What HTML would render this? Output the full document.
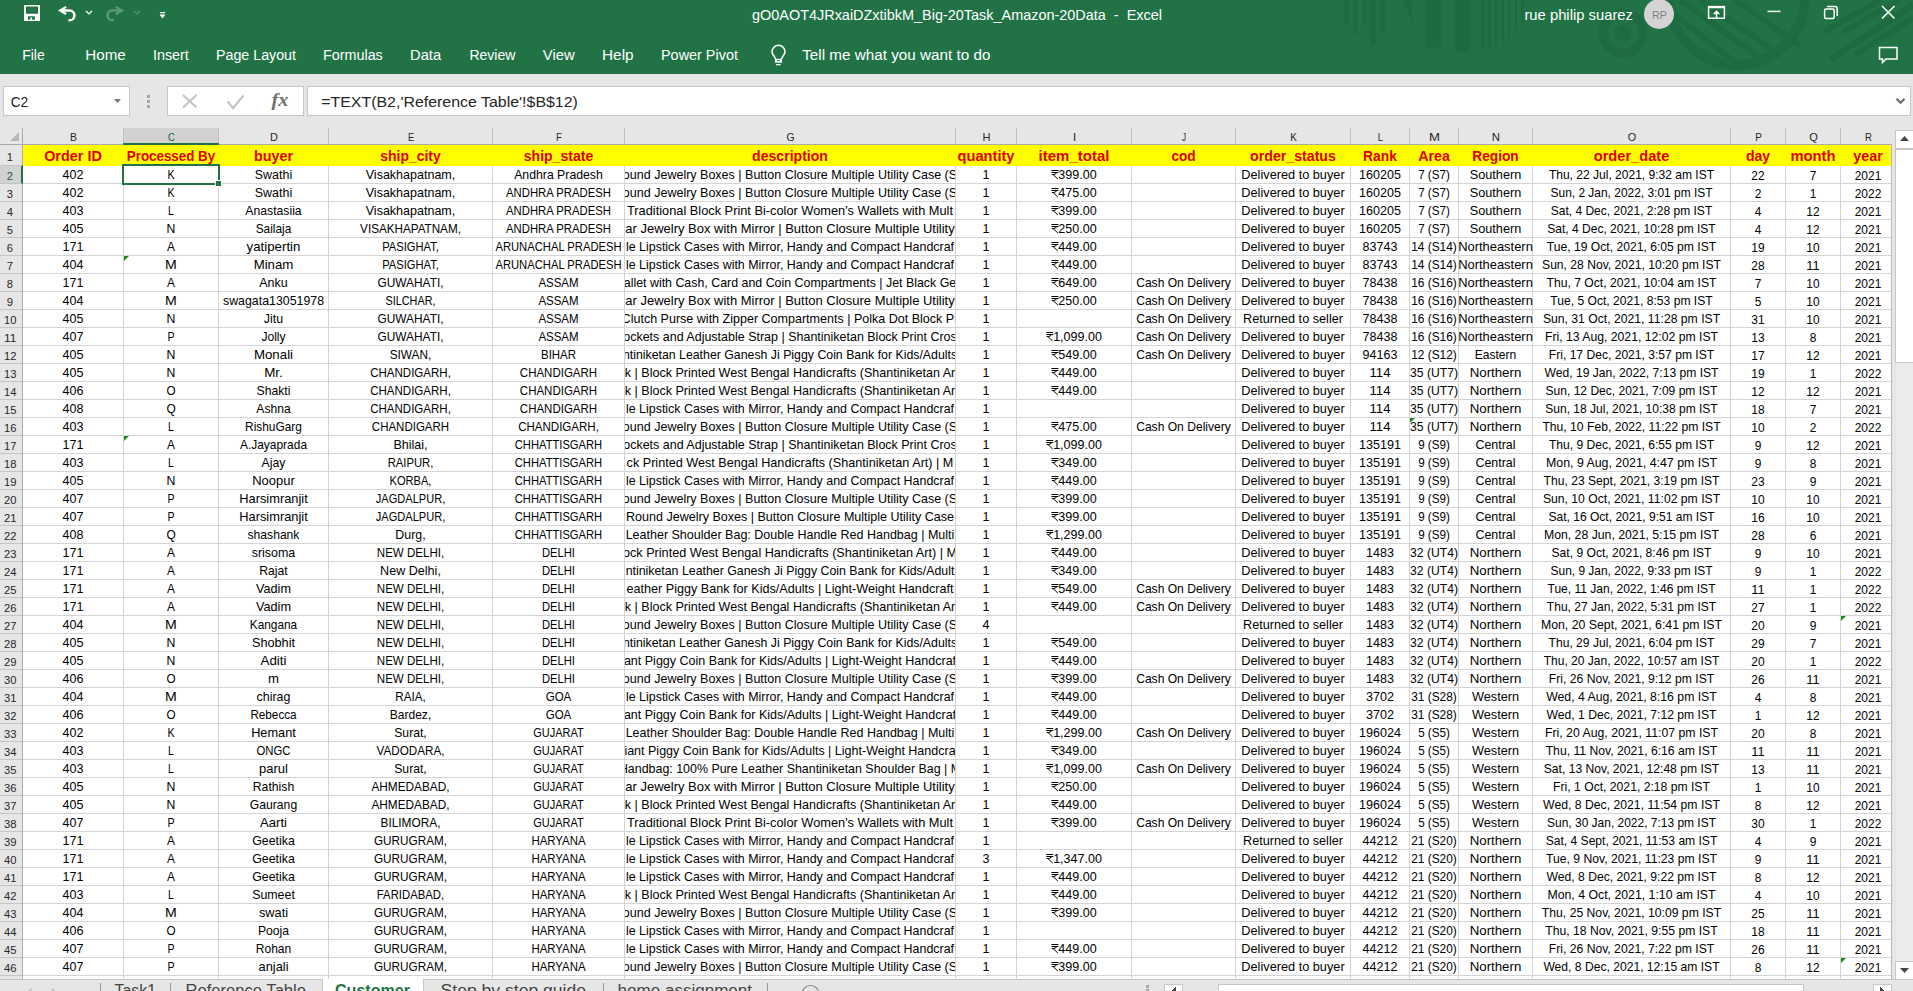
<!DOCTYPE html><html><head><meta charset="utf-8"><style>html,body{margin:0;padding:0;width:1913px;height:991px;overflow:hidden;background:#e6e6e6}svg{display:block}text{font-family:"Liberation Sans",sans-serif;white-space:pre}</style></head><body>
<svg width="1913" height="991" viewBox="0 0 1913 991" shape-rendering="crispEdges">
<rect x="0" y="0" width="1913" height="74" fill="#217346"/>
<g fill="#1f6b41" stroke="none" shape-rendering="geometricPrecision">
<rect x="1344" y="0" width="5" height="24"/>
<rect x="1353" y="0" width="5" height="34"/>
<rect x="1362" y="0" width="5" height="24"/>
<rect x="1370" y="0" width="6" height="45"/>
<rect x="1380" y="0" width="5" height="31"/>
<rect x="1481" y="0" width="3" height="50"/>
<rect x="1488" y="0" width="3" height="48"/>
<rect x="1495" y="0" width="2" height="46"/>
<rect x="1502" y="0" width="2" height="42"/>
<rect x="1508" y="0" width="2" height="37"/>
<rect x="1515" y="0" width="2" height="31"/>
<rect x="1521" y="0" width="3" height="23"/>
<path d="M1426,0 H1442 V46 A8,4 0 0 1 1426,42 Z"/>
<path d="M1455,0 H1470 V50 A8,4 0 0 1 1455,50 Z"/>
<path d="M1403,0 H1412 V23 Z"/>
</g>
<g fill="none" stroke="#1f6b41" shape-rendering="geometricPrecision">
<circle cx="1623" cy="33" r="20" stroke-width="9"/>
<circle cx="1623" cy="33" r="8" fill="#1f6b41" stroke="none"/>
<circle cx="1737" cy="-3" r="68" stroke-width="10"/>
</g>
<g stroke="#1f6b41" stroke-width="6" shape-rendering="geometricPrecision" stroke-linecap="butt">
<line x1="1680" y1="0" x2="1763" y2="60"/>
<line x1="1668" y1="10" x2="1740" y2="66"/>
<line x1="1700" y1="0" x2="1780" y2="55"/>
<line x1="1735" y1="0" x2="1800" y2="45"/>
<line x1="1824" y1="32" x2="1880" y2="0"/>
<line x1="1843" y1="32" x2="1900" y2="0"/>
<line x1="1830" y1="60" x2="1913" y2="5"/>
<line x1="1855" y1="55" x2="1913" y2="18"/>
</g>
<g shape-rendering="geometricPrecision">
<path d="M24,5 H40 V21 H24 Z M26,6.5 V13.8 H38 V6.5 Z M28,16.3 V19.7 H30.2 V17.4 H32.1 V19.7 H34.9 V16.3 Z" fill="#ffffff" fill-rule="evenodd"/>
<path d="M58,10.5 L65.5,6 L66.8,7.8 L62.2,10.5 L66.8,13.2 L65.5,15 Z" fill="#ffffff"/>
<path d="M61.5,10.5 H69.5 A4.9,4.9 0 0 1 69.5,20.3 H68.5" fill="none" stroke="#ffffff" stroke-width="2.6"/>
<path d="M86,11 L89,14 L92,11" fill="none" stroke="#ffffff" stroke-width="1.2"/>
<path d="M124,10.5 L116.5,6 L115.2,7.8 L119.8,10.5 L115.2,13.2 L116.5,15 Z" fill="#5a9a76"/>
<path d="M120.5,10.5 H112.5 A4.9,4.9 0 0 0 112.5,20.3 H113.5" fill="none" stroke="#5a9a76" stroke-width="2.6"/>
<path d="M134,11 L137,14 L140,11" fill="none" stroke="#4f9470" stroke-width="1.2"/>
<rect x="160" y="12" width="5" height="1.3" fill="#ffffff"/><path d="M159.5,14.5 H165.5 L162.5,18.5 Z" fill="#ffffff"/>
</g>
<text x="752.00" y="19.60" font-size="15" fill="#ffffff" textLength="409.99" lengthAdjust="spacingAndGlyphs">gO0AOT4JRxaiDZxtibkM_Big-20Task_Amazon-20Data  -  Excel</text>
<text x="1524.40" y="20.00" font-size="15" fill="#ffffff" textLength="108.61" lengthAdjust="spacingAndGlyphs">rue philip suarez</text>
<circle cx="1659" cy="14" r="15" fill="#d4d4d4" shape-rendering="geometricPrecision"/>
<text x="1652.00" y="19.00" font-size="11" fill="#808080" textLength="15.00" lengthAdjust="spacingAndGlyphs">RP</text>
<g shape-rendering="geometricPrecision" fill="none" stroke="#ffffff" stroke-width="1.5">
<rect x="1708.6" y="6.6" width="15.8" height="11.6"/><line x1="1708.6" y1="7.5" x2="1724.4" y2="7.5"/>
<path d="M1716.5,17.5 V12"/><path d="M1713.3,13.8 L1716.5,10.6 L1719.7,13.8 Z" fill="#ffffff" stroke-width="0.5"/>
<line x1="1767.5" y1="11.4" x2="1780.5" y2="11.4"/>
<rect x="1824.6" y="9" width="9.6" height="9.6" rx="1.5"/><path d="M1827,6.6 H1835 A2.2,2.2 0 0 1 1837.2,8.8 V16"/>
<path d="M1882,6 L1894.5,18.5 M1894.5,6 L1882,18.5"/>
<path d="M1879.5,47.5 H1897 V59 H1886 L1882.5,62.5 V59 H1879.5 Z"/>
</g>
<text x="22.20" y="60.30" font-size="15.5" fill="#ffffff" textLength="22.60" lengthAdjust="spacingAndGlyphs">File</text>
<text x="85.30" y="60.30" font-size="15.5" fill="#ffffff" textLength="40.39" lengthAdjust="spacingAndGlyphs">Home</text>
<text x="153.00" y="60.30" font-size="15.5" fill="#ffffff" textLength="35.80" lengthAdjust="spacingAndGlyphs">Insert</text>
<text x="216.00" y="60.30" font-size="15.5" fill="#ffffff" textLength="80.00" lengthAdjust="spacingAndGlyphs">Page Layout</text>
<text x="323.10" y="60.30" font-size="15.5" fill="#ffffff" textLength="59.69" lengthAdjust="spacingAndGlyphs">Formulas</text>
<text x="410.00" y="60.30" font-size="15.5" fill="#ffffff" textLength="31.09" lengthAdjust="spacingAndGlyphs">Data</text>
<text x="469.40" y="60.30" font-size="15.5" fill="#ffffff" textLength="46.06" lengthAdjust="spacingAndGlyphs">Review</text>
<text x="542.80" y="60.30" font-size="15.5" fill="#ffffff" textLength="31.86" lengthAdjust="spacingAndGlyphs">View</text>
<text x="602.00" y="60.30" font-size="15.5" fill="#ffffff" textLength="31.59" lengthAdjust="spacingAndGlyphs">Help</text>
<text x="661.00" y="60.30" font-size="15.5" fill="#ffffff" textLength="76.91" lengthAdjust="spacingAndGlyphs">Power Pivot</text>
<text x="802.20" y="60.30" font-size="15.5" fill="#ffffff" textLength="188.20" lengthAdjust="spacingAndGlyphs">Tell me what you want to do</text>
<g shape-rendering="geometricPrecision" fill="none" stroke="#ffffff" stroke-width="1.6">
<path d="M775.3,59 C775.3,56.5 772,54.8 772,51.8 A6.5,6.5 0 0 1 785,51.8 C785,54.8 781.7,56.5 781.7,59"/>
</g>
<rect x="775" y="58.8" width="7" height="3.9" fill="#ffffff" shape-rendering="geometricPrecision"/>
<rect x="777" y="60.2" width="3" height="0.9" fill="#217346" shape-rendering="geometricPrecision"/>
<rect x="776" y="64" width="4.6" height="1.3" fill="#ffffff" shape-rendering="geometricPrecision"/>
<rect x="3.5" y="86.5" width="126" height="29" fill="#ffffff" stroke="#c6c6c6" stroke-width="1"/>
<text x="10.70" y="106.90" font-size="15" fill="#222222" textLength="17.60" lengthAdjust="spacingAndGlyphs">C2</text>
<path d="M114,99 H121 L117.5,103 Z" fill="#777777" shape-rendering="geometricPrecision"/>
<rect x="147" y="95" width="3" height="3" fill="#a6a6a6"/>
<rect x="147" y="100" width="3" height="3" fill="#a6a6a6"/>
<rect x="147" y="105" width="3" height="3" fill="#a6a6a6"/>
<rect x="167.5" y="86.5" width="136" height="29" fill="#ffffff" stroke="#c6c6c6" stroke-width="1"/>
<g shape-rendering="geometricPrecision" fill="none" stroke="#c4c4c4" stroke-width="2.2">
<path d="M183,95 L196.5,107.5 M196.5,95 L183,107.5"/>
<path d="M227.5,101.5 L233,108 L243.5,95.5"/>
</g>
<text x="271.5" y="105.5" font-family="Liberation Serif" font-style="italic" font-weight="bold" font-size="19" fill="#707070" textLength="17" lengthAdjust="spacingAndGlyphs" style="font-family:'Liberation Serif',serif">fx</text>
<rect x="307.5" y="86.5" width="1603" height="29" fill="#ffffff" stroke="#c6c6c6" stroke-width="1"/>
<text x="321.20" y="106.60" font-size="15.2" fill="#262626" textLength="256.70" lengthAdjust="spacingAndGlyphs">=TEXT(B2,&#x27;Reference Table&#x27;!$B$12)</text>
<path d="M1896.5,98.8 L1900.5,102.8 L1904.5,98.8" fill="none" stroke="#6e6e6e" stroke-width="2.2" shape-rendering="geometricPrecision"/>
<rect x="0" y="128" width="1892" height="17" fill="#e6e6e6"/>
<rect x="123" y="128" width="96" height="15" fill="#d2d2d2"/>
<rect x="123" y="128" width="1" height="16" fill="#c2c2c2"/>
<rect x="218" y="128" width="1" height="16" fill="#c2c2c2"/>
<rect x="328" y="128" width="1" height="16" fill="#c2c2c2"/>
<rect x="492" y="128" width="1" height="16" fill="#c2c2c2"/>
<rect x="624" y="128" width="1" height="16" fill="#c2c2c2"/>
<rect x="955" y="128" width="1" height="16" fill="#c2c2c2"/>
<rect x="1016" y="128" width="1" height="16" fill="#c2c2c2"/>
<rect x="1131" y="128" width="1" height="16" fill="#c2c2c2"/>
<rect x="1235" y="128" width="1" height="16" fill="#c2c2c2"/>
<rect x="1350" y="128" width="1" height="16" fill="#c2c2c2"/>
<rect x="1409" y="128" width="1" height="16" fill="#c2c2c2"/>
<rect x="1458" y="128" width="1" height="16" fill="#c2c2c2"/>
<rect x="1532" y="128" width="1" height="16" fill="#c2c2c2"/>
<rect x="1730" y="128" width="1" height="16" fill="#c2c2c2"/>
<rect x="1785" y="128" width="1" height="16" fill="#c2c2c2"/>
<rect x="1840" y="128" width="1" height="16" fill="#c2c2c2"/>
<rect x="0" y="144" width="1892" height="1" fill="#ababab"/>
<rect x="123" y="143" width="96" height="2" fill="#217346"/>
<path d="M19,132 V141 H10 Z" fill="#b9b9b9" shape-rendering="geometricPrecision"/>
<rect x="22" y="128" width="1" height="851" fill="#ababab"/>
<rect x="23" y="145" width="1868" height="834" fill="#ffffff"/>
<rect x="23" y="145" width="1868" height="21" fill="#ffff00"/>
<rect x="23" y="183" width="1868" height="1" fill="#d4d4d4"/>
<rect x="23" y="201" width="1868" height="1" fill="#d4d4d4"/>
<rect x="23" y="219" width="1868" height="1" fill="#d4d4d4"/>
<rect x="23" y="237" width="1868" height="1" fill="#d4d4d4"/>
<rect x="23" y="255" width="1868" height="1" fill="#d4d4d4"/>
<rect x="23" y="273" width="1868" height="1" fill="#d4d4d4"/>
<rect x="23" y="291" width="1868" height="1" fill="#d4d4d4"/>
<rect x="23" y="309" width="1868" height="1" fill="#d4d4d4"/>
<rect x="23" y="327" width="1868" height="1" fill="#d4d4d4"/>
<rect x="23" y="345" width="1868" height="1" fill="#d4d4d4"/>
<rect x="23" y="363" width="1868" height="1" fill="#d4d4d4"/>
<rect x="23" y="381" width="1868" height="1" fill="#d4d4d4"/>
<rect x="23" y="399" width="1868" height="1" fill="#d4d4d4"/>
<rect x="23" y="417" width="1868" height="1" fill="#d4d4d4"/>
<rect x="23" y="435" width="1868" height="1" fill="#d4d4d4"/>
<rect x="23" y="453" width="1868" height="1" fill="#d4d4d4"/>
<rect x="23" y="471" width="1868" height="1" fill="#d4d4d4"/>
<rect x="23" y="489" width="1868" height="1" fill="#d4d4d4"/>
<rect x="23" y="507" width="1868" height="1" fill="#d4d4d4"/>
<rect x="23" y="525" width="1868" height="1" fill="#d4d4d4"/>
<rect x="23" y="543" width="1868" height="1" fill="#d4d4d4"/>
<rect x="23" y="561" width="1868" height="1" fill="#d4d4d4"/>
<rect x="23" y="579" width="1868" height="1" fill="#d4d4d4"/>
<rect x="23" y="597" width="1868" height="1" fill="#d4d4d4"/>
<rect x="23" y="615" width="1868" height="1" fill="#d4d4d4"/>
<rect x="23" y="633" width="1868" height="1" fill="#d4d4d4"/>
<rect x="23" y="651" width="1868" height="1" fill="#d4d4d4"/>
<rect x="23" y="669" width="1868" height="1" fill="#d4d4d4"/>
<rect x="23" y="687" width="1868" height="1" fill="#d4d4d4"/>
<rect x="23" y="705" width="1868" height="1" fill="#d4d4d4"/>
<rect x="23" y="723" width="1868" height="1" fill="#d4d4d4"/>
<rect x="23" y="741" width="1868" height="1" fill="#d4d4d4"/>
<rect x="23" y="759" width="1868" height="1" fill="#d4d4d4"/>
<rect x="23" y="777" width="1868" height="1" fill="#d4d4d4"/>
<rect x="23" y="795" width="1868" height="1" fill="#d4d4d4"/>
<rect x="23" y="813" width="1868" height="1" fill="#d4d4d4"/>
<rect x="23" y="831" width="1868" height="1" fill="#d4d4d4"/>
<rect x="23" y="849" width="1868" height="1" fill="#d4d4d4"/>
<rect x="23" y="867" width="1868" height="1" fill="#d4d4d4"/>
<rect x="23" y="885" width="1868" height="1" fill="#d4d4d4"/>
<rect x="23" y="903" width="1868" height="1" fill="#d4d4d4"/>
<rect x="23" y="921" width="1868" height="1" fill="#d4d4d4"/>
<rect x="23" y="939" width="1868" height="1" fill="#d4d4d4"/>
<rect x="23" y="957" width="1868" height="1" fill="#d4d4d4"/>
<rect x="23" y="975" width="1868" height="1" fill="#d4d4d4"/>
<rect x="123" y="166" width="1" height="813" fill="#d4d4d4"/>
<rect x="218" y="166" width="1" height="813" fill="#d4d4d4"/>
<rect x="328" y="166" width="1" height="813" fill="#d4d4d4"/>
<rect x="492" y="166" width="1" height="813" fill="#d4d4d4"/>
<rect x="624" y="166" width="1" height="813" fill="#d4d4d4"/>
<rect x="955" y="166" width="1" height="813" fill="#d4d4d4"/>
<rect x="1016" y="166" width="1" height="813" fill="#d4d4d4"/>
<rect x="1131" y="166" width="1" height="813" fill="#d4d4d4"/>
<rect x="1235" y="166" width="1" height="813" fill="#d4d4d4"/>
<rect x="1350" y="166" width="1" height="813" fill="#d4d4d4"/>
<rect x="1409" y="166" width="1" height="813" fill="#d4d4d4"/>
<rect x="1458" y="166" width="1" height="813" fill="#d4d4d4"/>
<rect x="1532" y="166" width="1" height="813" fill="#d4d4d4"/>
<rect x="1730" y="166" width="1" height="813" fill="#d4d4d4"/>
<rect x="1785" y="166" width="1" height="813" fill="#d4d4d4"/>
<rect x="1840" y="166" width="1" height="813" fill="#d4d4d4"/>
<rect x="1891" y="144" width="1" height="836" fill="#b8b8b8"/>
<rect x="0" y="145" width="22" height="834" fill="#e6e6e6"/>
<rect x="0" y="166" width="21" height="17" fill="#d2d2d2"/>
<rect x="21" y="165" width="2" height="19" fill="#217346"/>
<rect x="0" y="165" width="22" height="1" fill="#c6c6c6"/>
<rect x="0" y="183" width="22" height="1" fill="#c6c6c6"/>
<rect x="0" y="201" width="22" height="1" fill="#c6c6c6"/>
<rect x="0" y="219" width="22" height="1" fill="#c6c6c6"/>
<rect x="0" y="237" width="22" height="1" fill="#c6c6c6"/>
<rect x="0" y="255" width="22" height="1" fill="#c6c6c6"/>
<rect x="0" y="273" width="22" height="1" fill="#c6c6c6"/>
<rect x="0" y="291" width="22" height="1" fill="#c6c6c6"/>
<rect x="0" y="309" width="22" height="1" fill="#c6c6c6"/>
<rect x="0" y="327" width="22" height="1" fill="#c6c6c6"/>
<rect x="0" y="345" width="22" height="1" fill="#c6c6c6"/>
<rect x="0" y="363" width="22" height="1" fill="#c6c6c6"/>
<rect x="0" y="381" width="22" height="1" fill="#c6c6c6"/>
<rect x="0" y="399" width="22" height="1" fill="#c6c6c6"/>
<rect x="0" y="417" width="22" height="1" fill="#c6c6c6"/>
<rect x="0" y="435" width="22" height="1" fill="#c6c6c6"/>
<rect x="0" y="453" width="22" height="1" fill="#c6c6c6"/>
<rect x="0" y="471" width="22" height="1" fill="#c6c6c6"/>
<rect x="0" y="489" width="22" height="1" fill="#c6c6c6"/>
<rect x="0" y="507" width="22" height="1" fill="#c6c6c6"/>
<rect x="0" y="525" width="22" height="1" fill="#c6c6c6"/>
<rect x="0" y="543" width="22" height="1" fill="#c6c6c6"/>
<rect x="0" y="561" width="22" height="1" fill="#c6c6c6"/>
<rect x="0" y="579" width="22" height="1" fill="#c6c6c6"/>
<rect x="0" y="597" width="22" height="1" fill="#c6c6c6"/>
<rect x="0" y="615" width="22" height="1" fill="#c6c6c6"/>
<rect x="0" y="633" width="22" height="1" fill="#c6c6c6"/>
<rect x="0" y="651" width="22" height="1" fill="#c6c6c6"/>
<rect x="0" y="669" width="22" height="1" fill="#c6c6c6"/>
<rect x="0" y="687" width="22" height="1" fill="#c6c6c6"/>
<rect x="0" y="705" width="22" height="1" fill="#c6c6c6"/>
<rect x="0" y="723" width="22" height="1" fill="#c6c6c6"/>
<rect x="0" y="741" width="22" height="1" fill="#c6c6c6"/>
<rect x="0" y="759" width="22" height="1" fill="#c6c6c6"/>
<rect x="0" y="777" width="22" height="1" fill="#c6c6c6"/>
<rect x="0" y="795" width="22" height="1" fill="#c6c6c6"/>
<rect x="0" y="813" width="22" height="1" fill="#c6c6c6"/>
<rect x="0" y="831" width="22" height="1" fill="#c6c6c6"/>
<rect x="0" y="849" width="22" height="1" fill="#c6c6c6"/>
<rect x="0" y="867" width="22" height="1" fill="#c6c6c6"/>
<rect x="0" y="885" width="22" height="1" fill="#c6c6c6"/>
<rect x="0" y="903" width="22" height="1" fill="#c6c6c6"/>
<rect x="0" y="921" width="22" height="1" fill="#c6c6c6"/>
<rect x="0" y="939" width="22" height="1" fill="#c6c6c6"/>
<rect x="0" y="957" width="22" height="1" fill="#c6c6c6"/>
<rect x="0" y="975" width="22" height="1" fill="#c6c6c6"/>
<rect x="0" y="979" width="1892" height="1" fill="#c6c6c6"/>
<text x="73.50" y="141.20" font-size="11.8" fill="#262626" text-anchor="middle" textLength="6.96" lengthAdjust="spacingAndGlyphs">B</text>
<text x="171.50" y="141.20" font-size="11.8" fill="#1d5b37" text-anchor="middle" textLength="6.83" lengthAdjust="spacingAndGlyphs">C</text>
<text x="274.00" y="141.20" font-size="11.8" fill="#262626" text-anchor="middle" textLength="7.88" lengthAdjust="spacingAndGlyphs">D</text>
<text x="411.00" y="141.20" font-size="11.8" fill="#262626" text-anchor="middle" textLength="6.25" lengthAdjust="spacingAndGlyphs">E</text>
<text x="559.00" y="141.20" font-size="11.8" fill="#262626" text-anchor="middle" textLength="5.88" lengthAdjust="spacingAndGlyphs">F</text>
<text x="790.50" y="141.20" font-size="11.8" fill="#262626" text-anchor="middle" textLength="8.07" lengthAdjust="spacingAndGlyphs">G</text>
<text x="986.50" y="141.20" font-size="11.8" fill="#262626" text-anchor="middle" textLength="7.97" lengthAdjust="spacingAndGlyphs">H</text>
<text x="1074.50" y="141.20" font-size="11.8" fill="#262626" text-anchor="middle" textLength="3.23" lengthAdjust="spacingAndGlyphs">I</text>
<text x="1184.00" y="141.20" font-size="11.8" fill="#262626" text-anchor="middle" textLength="4.08" lengthAdjust="spacingAndGlyphs">J</text>
<text x="1293.50" y="141.20" font-size="11.8" fill="#262626" text-anchor="middle" textLength="6.65" lengthAdjust="spacingAndGlyphs">K</text>
<text x="1380.50" y="141.20" font-size="11.8" fill="#262626" text-anchor="middle" textLength="5.38" lengthAdjust="spacingAndGlyphs">L</text>
<text x="1434.50" y="141.20" font-size="11.8" fill="#262626" text-anchor="middle" textLength="10.94" lengthAdjust="spacingAndGlyphs">M</text>
<text x="1496.00" y="141.20" font-size="11.8" fill="#262626" text-anchor="middle" textLength="8.26" lengthAdjust="spacingAndGlyphs">N</text>
<text x="1632.00" y="141.20" font-size="11.8" fill="#262626" text-anchor="middle" textLength="8.47" lengthAdjust="spacingAndGlyphs">O</text>
<text x="1758.50" y="141.20" font-size="11.8" fill="#262626" text-anchor="middle" textLength="6.61" lengthAdjust="spacingAndGlyphs">P</text>
<text x="1813.50" y="141.20" font-size="11.8" fill="#262626" text-anchor="middle" textLength="8.61" lengthAdjust="spacingAndGlyphs">Q</text>
<text x="1868.50" y="141.20" font-size="11.8" fill="#262626" text-anchor="middle" textLength="6.95" lengthAdjust="spacingAndGlyphs">R</text>
<text x="9.80" y="161.00" font-size="11.6" fill="#262626" text-anchor="middle" textLength="6.23" lengthAdjust="spacingAndGlyphs">1</text>
<text x="9.80" y="180.00" font-size="11.6" fill="#1d5b37" text-anchor="middle" textLength="6.23" lengthAdjust="spacingAndGlyphs">2</text>
<text x="9.80" y="198.00" font-size="11.6" fill="#262626" text-anchor="middle" textLength="6.23" lengthAdjust="spacingAndGlyphs">3</text>
<text x="9.80" y="216.00" font-size="11.6" fill="#262626" text-anchor="middle" textLength="6.23" lengthAdjust="spacingAndGlyphs">4</text>
<text x="9.80" y="234.00" font-size="11.6" fill="#262626" text-anchor="middle" textLength="6.23" lengthAdjust="spacingAndGlyphs">5</text>
<text x="9.80" y="252.00" font-size="11.6" fill="#262626" text-anchor="middle" textLength="6.23" lengthAdjust="spacingAndGlyphs">6</text>
<text x="9.80" y="270.00" font-size="11.6" fill="#262626" text-anchor="middle" textLength="6.23" lengthAdjust="spacingAndGlyphs">7</text>
<text x="9.80" y="288.00" font-size="11.6" fill="#262626" text-anchor="middle" textLength="6.23" lengthAdjust="spacingAndGlyphs">8</text>
<text x="9.80" y="306.00" font-size="11.6" fill="#262626" text-anchor="middle" textLength="6.23" lengthAdjust="spacingAndGlyphs">9</text>
<text x="10.20" y="324.00" font-size="11.6" fill="#262626" text-anchor="middle" textLength="12.47" lengthAdjust="spacingAndGlyphs">10</text>
<text x="10.20" y="342.00" font-size="11.6" fill="#262626" text-anchor="middle" textLength="12.47" lengthAdjust="spacingAndGlyphs">11</text>
<text x="10.20" y="360.00" font-size="11.6" fill="#262626" text-anchor="middle" textLength="12.47" lengthAdjust="spacingAndGlyphs">12</text>
<text x="10.20" y="378.00" font-size="11.6" fill="#262626" text-anchor="middle" textLength="12.47" lengthAdjust="spacingAndGlyphs">13</text>
<text x="10.20" y="396.00" font-size="11.6" fill="#262626" text-anchor="middle" textLength="12.47" lengthAdjust="spacingAndGlyphs">14</text>
<text x="10.20" y="414.00" font-size="11.6" fill="#262626" text-anchor="middle" textLength="12.47" lengthAdjust="spacingAndGlyphs">15</text>
<text x="10.20" y="432.00" font-size="11.6" fill="#262626" text-anchor="middle" textLength="12.47" lengthAdjust="spacingAndGlyphs">16</text>
<text x="10.20" y="450.00" font-size="11.6" fill="#262626" text-anchor="middle" textLength="12.47" lengthAdjust="spacingAndGlyphs">17</text>
<text x="10.20" y="468.00" font-size="11.6" fill="#262626" text-anchor="middle" textLength="12.47" lengthAdjust="spacingAndGlyphs">18</text>
<text x="10.20" y="486.00" font-size="11.6" fill="#262626" text-anchor="middle" textLength="12.47" lengthAdjust="spacingAndGlyphs">19</text>
<text x="10.20" y="504.00" font-size="11.6" fill="#262626" text-anchor="middle" textLength="12.47" lengthAdjust="spacingAndGlyphs">20</text>
<text x="10.20" y="522.00" font-size="11.6" fill="#262626" text-anchor="middle" textLength="12.47" lengthAdjust="spacingAndGlyphs">21</text>
<text x="10.20" y="540.00" font-size="11.6" fill="#262626" text-anchor="middle" textLength="12.47" lengthAdjust="spacingAndGlyphs">22</text>
<text x="10.20" y="558.00" font-size="11.6" fill="#262626" text-anchor="middle" textLength="12.47" lengthAdjust="spacingAndGlyphs">23</text>
<text x="10.20" y="576.00" font-size="11.6" fill="#262626" text-anchor="middle" textLength="12.47" lengthAdjust="spacingAndGlyphs">24</text>
<text x="10.20" y="594.00" font-size="11.6" fill="#262626" text-anchor="middle" textLength="12.47" lengthAdjust="spacingAndGlyphs">25</text>
<text x="10.20" y="612.00" font-size="11.6" fill="#262626" text-anchor="middle" textLength="12.47" lengthAdjust="spacingAndGlyphs">26</text>
<text x="10.20" y="630.00" font-size="11.6" fill="#262626" text-anchor="middle" textLength="12.47" lengthAdjust="spacingAndGlyphs">27</text>
<text x="10.20" y="648.00" font-size="11.6" fill="#262626" text-anchor="middle" textLength="12.47" lengthAdjust="spacingAndGlyphs">28</text>
<text x="10.20" y="666.00" font-size="11.6" fill="#262626" text-anchor="middle" textLength="12.47" lengthAdjust="spacingAndGlyphs">29</text>
<text x="10.20" y="684.00" font-size="11.6" fill="#262626" text-anchor="middle" textLength="12.47" lengthAdjust="spacingAndGlyphs">30</text>
<text x="10.20" y="702.00" font-size="11.6" fill="#262626" text-anchor="middle" textLength="12.47" lengthAdjust="spacingAndGlyphs">31</text>
<text x="10.20" y="720.00" font-size="11.6" fill="#262626" text-anchor="middle" textLength="12.47" lengthAdjust="spacingAndGlyphs">32</text>
<text x="10.20" y="738.00" font-size="11.6" fill="#262626" text-anchor="middle" textLength="12.47" lengthAdjust="spacingAndGlyphs">33</text>
<text x="10.20" y="756.00" font-size="11.6" fill="#262626" text-anchor="middle" textLength="12.47" lengthAdjust="spacingAndGlyphs">34</text>
<text x="10.20" y="774.00" font-size="11.6" fill="#262626" text-anchor="middle" textLength="12.47" lengthAdjust="spacingAndGlyphs">35</text>
<text x="10.20" y="792.00" font-size="11.6" fill="#262626" text-anchor="middle" textLength="12.47" lengthAdjust="spacingAndGlyphs">36</text>
<text x="10.20" y="810.00" font-size="11.6" fill="#262626" text-anchor="middle" textLength="12.47" lengthAdjust="spacingAndGlyphs">37</text>
<text x="10.20" y="828.00" font-size="11.6" fill="#262626" text-anchor="middle" textLength="12.47" lengthAdjust="spacingAndGlyphs">38</text>
<text x="10.20" y="846.00" font-size="11.6" fill="#262626" text-anchor="middle" textLength="12.47" lengthAdjust="spacingAndGlyphs">39</text>
<text x="10.20" y="864.00" font-size="11.6" fill="#262626" text-anchor="middle" textLength="12.47" lengthAdjust="spacingAndGlyphs">40</text>
<text x="10.20" y="882.00" font-size="11.6" fill="#262626" text-anchor="middle" textLength="12.47" lengthAdjust="spacingAndGlyphs">41</text>
<text x="10.20" y="900.00" font-size="11.6" fill="#262626" text-anchor="middle" textLength="12.47" lengthAdjust="spacingAndGlyphs">42</text>
<text x="10.20" y="918.00" font-size="11.6" fill="#262626" text-anchor="middle" textLength="12.47" lengthAdjust="spacingAndGlyphs">43</text>
<text x="10.20" y="936.00" font-size="11.6" fill="#262626" text-anchor="middle" textLength="12.47" lengthAdjust="spacingAndGlyphs">44</text>
<text x="10.20" y="954.00" font-size="11.6" fill="#262626" text-anchor="middle" textLength="12.47" lengthAdjust="spacingAndGlyphs">45</text>
<text x="10.20" y="972.00" font-size="11.6" fill="#262626" text-anchor="middle" textLength="12.47" lengthAdjust="spacingAndGlyphs">46</text>
<text x="73.00" y="161.00" font-size="14.2" font-weight="bold" fill="#e00000" text-anchor="middle" textLength="57.67" lengthAdjust="spacingAndGlyphs">Order ID</text>
<text x="171.00" y="161.00" font-size="14.2" font-weight="bold" fill="#e00000" text-anchor="middle" textLength="88.40" lengthAdjust="spacingAndGlyphs">Processed By</text>
<text x="273.50" y="161.00" font-size="14.2" font-weight="bold" fill="#e00000" text-anchor="middle" textLength="39.03" lengthAdjust="spacingAndGlyphs">buyer</text>
<text x="410.50" y="161.00" font-size="14.2" font-weight="bold" fill="#e00000" text-anchor="middle" textLength="60.31" lengthAdjust="spacingAndGlyphs">ship_city</text>
<text x="558.50" y="161.00" font-size="14.2" font-weight="bold" fill="#e00000" text-anchor="middle" textLength="69.48" lengthAdjust="spacingAndGlyphs">ship_state</text>
<text x="790.00" y="161.00" font-size="14.2" font-weight="bold" fill="#e00000" text-anchor="middle" textLength="75.81" lengthAdjust="spacingAndGlyphs">description</text>
<text x="986.00" y="161.00" font-size="14.2" font-weight="bold" fill="#e00000" text-anchor="middle" textLength="57.05" lengthAdjust="spacingAndGlyphs">quantity</text>
<text x="1074.00" y="161.00" font-size="14.2" font-weight="bold" fill="#e00000" text-anchor="middle" textLength="70.84" lengthAdjust="spacingAndGlyphs">item_total</text>
<text x="1183.50" y="161.00" font-size="14.2" font-weight="bold" fill="#e00000" text-anchor="middle" textLength="24.25" lengthAdjust="spacingAndGlyphs">cod</text>
<text x="1293.00" y="161.00" font-size="14.2" font-weight="bold" fill="#e00000" text-anchor="middle" textLength="85.83" lengthAdjust="spacingAndGlyphs">order_status</text>
<text x="1380.00" y="161.00" font-size="14.2" font-weight="bold" fill="#e00000" text-anchor="middle" textLength="33.79" lengthAdjust="spacingAndGlyphs">Rank</text>
<text x="1434.00" y="161.00" font-size="14.2" font-weight="bold" fill="#e00000" text-anchor="middle" textLength="31.74" lengthAdjust="spacingAndGlyphs">Area</text>
<text x="1495.50" y="161.00" font-size="14.2" font-weight="bold" fill="#e00000" text-anchor="middle" textLength="46.39" lengthAdjust="spacingAndGlyphs">Region</text>
<text x="1631.50" y="161.00" font-size="14.2" font-weight="bold" fill="#e00000" text-anchor="middle" textLength="75.52" lengthAdjust="spacingAndGlyphs">order_date</text>
<text x="1758.00" y="161.00" font-size="14.2" font-weight="bold" fill="#e00000" text-anchor="middle" textLength="24.22" lengthAdjust="spacingAndGlyphs">day</text>
<text x="1813.00" y="161.00" font-size="14.2" font-weight="bold" fill="#e00000" text-anchor="middle" textLength="45.02" lengthAdjust="spacingAndGlyphs">month</text>
<text x="1868.00" y="161.00" font-size="14.2" font-weight="bold" fill="#e00000" text-anchor="middle" textLength="29.58" lengthAdjust="spacingAndGlyphs">year</text>
<defs>
<clipPath id="cg"><rect x="625" y="160" width="330" height="820"/></clipPath>
</defs>
<text x="73.00" y="179.00" font-size="13.3" fill="#000000" text-anchor="middle" textLength="20.91" lengthAdjust="spacingAndGlyphs">402</text>
<text x="171.00" y="179.00" font-size="13.3" fill="#000000" text-anchor="middle" textLength="7.14" lengthAdjust="spacingAndGlyphs">K</text>
<text x="273.50" y="179.00" font-size="13.3" fill="#000000" text-anchor="middle" textLength="37.32" lengthAdjust="spacingAndGlyphs">Swathi</text>
<text x="410.50" y="179.00" font-size="13.3" fill="#000000" text-anchor="middle" textLength="89.50" lengthAdjust="spacingAndGlyphs">Visakhapatnam,</text>
<text x="558.50" y="179.00" font-size="13.3" fill="#000000" text-anchor="middle" textLength="88.70" lengthAdjust="spacingAndGlyphs">Andhra Pradesh</text>
<g clip-path="url(#cg)">
<text x="790.00" y="179.00" font-size="13.3" fill="#000000" text-anchor="middle" textLength="334.28" lengthAdjust="spacingAndGlyphs">ound Jewelry Boxes | Button Closure Multiple Utility Case (S</text>
</g>
<text x="986.00" y="179.00" font-size="13.3" fill="#000000" text-anchor="middle" textLength="6.97" lengthAdjust="spacingAndGlyphs">1</text>
<path d="M1051.46,170.50 H1058.46 M1051.46,172.50 H1058.46 M1051.86,174.50 H1053.66 Q1056.36,174.50 1056.36,172.50 M1053.06,174.50 L1057.86,179.00" fill="none" stroke="#000" stroke-width="1.0" shape-rendering="geometricPrecision"/>
<text x="1058.33" y="179.00" font-size="13.3" fill="#000000" textLength="38.32" lengthAdjust="spacingAndGlyphs">399.00</text>
<text x="1293.00" y="179.00" font-size="13.3" fill="#000000" text-anchor="middle" textLength="103.29" lengthAdjust="spacingAndGlyphs">Delivered to buyer</text>
<text x="1380.00" y="179.00" font-size="13.3" fill="#000000" text-anchor="middle" textLength="41.81" lengthAdjust="spacingAndGlyphs">160205</text>
<text x="1434.00" y="179.00" font-size="13.3" fill="#000000" text-anchor="middle" textLength="31.70" lengthAdjust="spacingAndGlyphs">7 (S7)</text>
<text x="1495.50" y="179.00" font-size="13.3" fill="#000000" text-anchor="middle" textLength="51.48" lengthAdjust="spacingAndGlyphs">Southern</text>
<text x="1631.50" y="179.00" font-size="13.3" fill="#000000" text-anchor="middle" textLength="165.22" lengthAdjust="spacingAndGlyphs">Thu, 22 Jul, 2021, 9:32 am IST</text>
<text x="1758.00" y="180.00" font-size="12.4" fill="#000000" text-anchor="middle" textLength="13.28" lengthAdjust="spacingAndGlyphs">22</text>
<text x="1813.00" y="180.00" font-size="12.4" fill="#000000" text-anchor="middle" textLength="6.64" lengthAdjust="spacingAndGlyphs">7</text>
<text x="1868.00" y="180.00" font-size="12.4" fill="#000000" text-anchor="middle" textLength="26.56" lengthAdjust="spacingAndGlyphs">2021</text>
<text x="73.00" y="197.00" font-size="13.3" fill="#000000" text-anchor="middle" textLength="20.91" lengthAdjust="spacingAndGlyphs">402</text>
<text x="171.00" y="197.00" font-size="13.3" fill="#000000" text-anchor="middle" textLength="7.14" lengthAdjust="spacingAndGlyphs">K</text>
<text x="273.50" y="197.00" font-size="13.3" fill="#000000" text-anchor="middle" textLength="37.32" lengthAdjust="spacingAndGlyphs">Swathi</text>
<text x="410.50" y="197.00" font-size="13.3" fill="#000000" text-anchor="middle" textLength="89.50" lengthAdjust="spacingAndGlyphs">Visakhapatnam,</text>
<text x="558.50" y="197.00" font-size="13.3" fill="#000000" text-anchor="middle" textLength="104.84" lengthAdjust="spacingAndGlyphs">ANDHRA PRADESH</text>
<g clip-path="url(#cg)">
<text x="790.00" y="197.00" font-size="13.3" fill="#000000" text-anchor="middle" textLength="334.28" lengthAdjust="spacingAndGlyphs">ound Jewelry Boxes | Button Closure Multiple Utility Case (S</text>
</g>
<text x="986.00" y="197.00" font-size="13.3" fill="#000000" text-anchor="middle" textLength="6.97" lengthAdjust="spacingAndGlyphs">1</text>
<path d="M1051.46,188.50 H1058.46 M1051.46,190.50 H1058.46 M1051.86,192.50 H1053.66 Q1056.36,192.50 1056.36,190.50 M1053.06,192.50 L1057.86,197.00" fill="none" stroke="#000" stroke-width="1.0" shape-rendering="geometricPrecision"/>
<text x="1058.33" y="197.00" font-size="13.3" fill="#000000" textLength="38.32" lengthAdjust="spacingAndGlyphs">475.00</text>
<text x="1293.00" y="197.00" font-size="13.3" fill="#000000" text-anchor="middle" textLength="103.29" lengthAdjust="spacingAndGlyphs">Delivered to buyer</text>
<text x="1380.00" y="197.00" font-size="13.3" fill="#000000" text-anchor="middle" textLength="41.81" lengthAdjust="spacingAndGlyphs">160205</text>
<text x="1434.00" y="197.00" font-size="13.3" fill="#000000" text-anchor="middle" textLength="31.70" lengthAdjust="spacingAndGlyphs">7 (S7)</text>
<text x="1495.50" y="197.00" font-size="13.3" fill="#000000" text-anchor="middle" textLength="51.48" lengthAdjust="spacingAndGlyphs">Southern</text>
<text x="1631.50" y="197.00" font-size="13.3" fill="#000000" text-anchor="middle" textLength="161.93" lengthAdjust="spacingAndGlyphs">Sun, 2 Jan, 2022, 3:01 pm IST</text>
<text x="1758.00" y="198.00" font-size="12.4" fill="#000000" text-anchor="middle" textLength="6.64" lengthAdjust="spacingAndGlyphs">2</text>
<text x="1813.00" y="198.00" font-size="12.4" fill="#000000" text-anchor="middle" textLength="6.64" lengthAdjust="spacingAndGlyphs">1</text>
<text x="1868.00" y="198.00" font-size="12.4" fill="#000000" text-anchor="middle" textLength="26.56" lengthAdjust="spacingAndGlyphs">2022</text>
<text x="73.00" y="215.00" font-size="13.3" fill="#000000" text-anchor="middle" textLength="20.91" lengthAdjust="spacingAndGlyphs">403</text>
<text x="171.00" y="215.00" font-size="13.3" fill="#000000" text-anchor="middle" textLength="5.78" lengthAdjust="spacingAndGlyphs">L</text>
<text x="273.50" y="215.00" font-size="13.3" fill="#000000" text-anchor="middle" textLength="56.29" lengthAdjust="spacingAndGlyphs">Anastasiia</text>
<text x="410.50" y="215.00" font-size="13.3" fill="#000000" text-anchor="middle" textLength="89.50" lengthAdjust="spacingAndGlyphs">Visakhapatnam,</text>
<text x="558.50" y="215.00" font-size="13.3" fill="#000000" text-anchor="middle" textLength="104.84" lengthAdjust="spacingAndGlyphs">ANDHRA PRADESH</text>
<g clip-path="url(#cg)">
<text x="790.00" y="215.00" font-size="13.3" fill="#000000" text-anchor="middle" textLength="325.99" lengthAdjust="spacingAndGlyphs">Traditional Block Print Bi-color Women&#x27;s Wallets with Mult</text>
</g>
<text x="986.00" y="215.00" font-size="13.3" fill="#000000" text-anchor="middle" textLength="6.97" lengthAdjust="spacingAndGlyphs">1</text>
<path d="M1051.46,206.50 H1058.46 M1051.46,208.50 H1058.46 M1051.86,210.50 H1053.66 Q1056.36,210.50 1056.36,208.50 M1053.06,210.50 L1057.86,215.00" fill="none" stroke="#000" stroke-width="1.0" shape-rendering="geometricPrecision"/>
<text x="1058.33" y="215.00" font-size="13.3" fill="#000000" textLength="38.32" lengthAdjust="spacingAndGlyphs">399.00</text>
<text x="1293.00" y="215.00" font-size="13.3" fill="#000000" text-anchor="middle" textLength="103.29" lengthAdjust="spacingAndGlyphs">Delivered to buyer</text>
<text x="1380.00" y="215.00" font-size="13.3" fill="#000000" text-anchor="middle" textLength="41.81" lengthAdjust="spacingAndGlyphs">160205</text>
<text x="1434.00" y="215.00" font-size="13.3" fill="#000000" text-anchor="middle" textLength="31.70" lengthAdjust="spacingAndGlyphs">7 (S7)</text>
<text x="1495.50" y="215.00" font-size="13.3" fill="#000000" text-anchor="middle" textLength="51.48" lengthAdjust="spacingAndGlyphs">Southern</text>
<text x="1631.50" y="215.00" font-size="13.3" fill="#000000" text-anchor="middle" textLength="161.47" lengthAdjust="spacingAndGlyphs">Sat, 4 Dec, 2021, 2:28 pm IST</text>
<text x="1758.00" y="216.00" font-size="12.4" fill="#000000" text-anchor="middle" textLength="6.64" lengthAdjust="spacingAndGlyphs">4</text>
<text x="1813.00" y="216.00" font-size="12.4" fill="#000000" text-anchor="middle" textLength="13.28" lengthAdjust="spacingAndGlyphs">12</text>
<text x="1868.00" y="216.00" font-size="12.4" fill="#000000" text-anchor="middle" textLength="26.56" lengthAdjust="spacingAndGlyphs">2021</text>
<text x="73.00" y="233.00" font-size="13.3" fill="#000000" text-anchor="middle" textLength="20.91" lengthAdjust="spacingAndGlyphs">405</text>
<text x="171.00" y="233.00" font-size="13.3" fill="#000000" text-anchor="middle" textLength="8.88" lengthAdjust="spacingAndGlyphs">N</text>
<text x="273.50" y="233.00" font-size="13.3" fill="#000000" text-anchor="middle" textLength="35.68" lengthAdjust="spacingAndGlyphs">Sailaja</text>
<text x="410.50" y="233.00" font-size="13.3" fill="#000000" text-anchor="middle" textLength="100.80" lengthAdjust="spacingAndGlyphs">VISAKHAPATNAM,</text>
<text x="558.50" y="233.00" font-size="13.3" fill="#000000" text-anchor="middle" textLength="104.84" lengthAdjust="spacingAndGlyphs">ANDHRA PRADESH</text>
<g clip-path="url(#cg)">
<text x="790.00" y="233.00" font-size="13.3" fill="#000000" text-anchor="middle" textLength="329.39" lengthAdjust="spacingAndGlyphs">ar Jewelry Box with Mirror | Button Closure Multiple Utility</text>
</g>
<text x="986.00" y="233.00" font-size="13.3" fill="#000000" text-anchor="middle" textLength="6.97" lengthAdjust="spacingAndGlyphs">1</text>
<path d="M1051.46,224.50 H1058.46 M1051.46,226.50 H1058.46 M1051.86,228.50 H1053.66 Q1056.36,228.50 1056.36,226.50 M1053.06,228.50 L1057.86,233.00" fill="none" stroke="#000" stroke-width="1.0" shape-rendering="geometricPrecision"/>
<text x="1058.33" y="233.00" font-size="13.3" fill="#000000" textLength="38.32" lengthAdjust="spacingAndGlyphs">250.00</text>
<text x="1293.00" y="233.00" font-size="13.3" fill="#000000" text-anchor="middle" textLength="103.29" lengthAdjust="spacingAndGlyphs">Delivered to buyer</text>
<text x="1380.00" y="233.00" font-size="13.3" fill="#000000" text-anchor="middle" textLength="41.81" lengthAdjust="spacingAndGlyphs">160205</text>
<text x="1434.00" y="233.00" font-size="13.3" fill="#000000" text-anchor="middle" textLength="31.70" lengthAdjust="spacingAndGlyphs">7 (S7)</text>
<text x="1495.50" y="233.00" font-size="13.3" fill="#000000" text-anchor="middle" textLength="51.48" lengthAdjust="spacingAndGlyphs">Southern</text>
<text x="1631.50" y="233.00" font-size="13.3" fill="#000000" text-anchor="middle" textLength="168.44" lengthAdjust="spacingAndGlyphs">Sat, 4 Dec, 2021, 10:28 pm IST</text>
<text x="1758.00" y="234.00" font-size="12.4" fill="#000000" text-anchor="middle" textLength="6.64" lengthAdjust="spacingAndGlyphs">4</text>
<text x="1813.00" y="234.00" font-size="12.4" fill="#000000" text-anchor="middle" textLength="13.28" lengthAdjust="spacingAndGlyphs">12</text>
<text x="1868.00" y="234.00" font-size="12.4" fill="#000000" text-anchor="middle" textLength="26.56" lengthAdjust="spacingAndGlyphs">2021</text>
<text x="73.00" y="251.00" font-size="13.3" fill="#000000" text-anchor="middle" textLength="20.91" lengthAdjust="spacingAndGlyphs">171</text>
<text x="171.00" y="251.00" font-size="13.3" fill="#000000" text-anchor="middle" textLength="7.96" lengthAdjust="spacingAndGlyphs">A</text>
<text x="273.50" y="251.00" font-size="13.3" fill="#000000" text-anchor="middle" textLength="53.88" lengthAdjust="spacingAndGlyphs">yatipertin</text>
<text x="410.50" y="251.00" font-size="13.3" fill="#000000" text-anchor="middle" textLength="56.67" lengthAdjust="spacingAndGlyphs">PASIGHAT,</text>
<text x="558.50" y="251.00" font-size="13.3" fill="#000000" text-anchor="middle" textLength="126.17" lengthAdjust="spacingAndGlyphs">ARUNACHAL PRADESH</text>
<g clip-path="url(#cg)">
<text x="790.00" y="251.00" font-size="13.3" fill="#000000" text-anchor="middle" textLength="328.09" lengthAdjust="spacingAndGlyphs">le Lipstick Cases with Mirror, Handy and Compact Handcraf</text>
</g>
<text x="986.00" y="251.00" font-size="13.3" fill="#000000" text-anchor="middle" textLength="6.97" lengthAdjust="spacingAndGlyphs">1</text>
<path d="M1051.46,242.50 H1058.46 M1051.46,244.50 H1058.46 M1051.86,246.50 H1053.66 Q1056.36,246.50 1056.36,244.50 M1053.06,246.50 L1057.86,251.00" fill="none" stroke="#000" stroke-width="1.0" shape-rendering="geometricPrecision"/>
<text x="1058.33" y="251.00" font-size="13.3" fill="#000000" textLength="38.32" lengthAdjust="spacingAndGlyphs">449.00</text>
<text x="1293.00" y="251.00" font-size="13.3" fill="#000000" text-anchor="middle" textLength="103.29" lengthAdjust="spacingAndGlyphs">Delivered to buyer</text>
<text x="1380.00" y="251.00" font-size="13.3" fill="#000000" text-anchor="middle" textLength="34.85" lengthAdjust="spacingAndGlyphs">83743</text>
<text x="1434.00" y="251.00" font-size="13.3" fill="#000000" text-anchor="middle" textLength="45.64" lengthAdjust="spacingAndGlyphs">14 (S14)</text>
<text x="1495.50" y="251.00" font-size="13.3" fill="#000000" text-anchor="middle" textLength="74.72" lengthAdjust="spacingAndGlyphs">Northeastern</text>
<text x="1631.50" y="251.00" font-size="13.3" fill="#000000" text-anchor="middle" textLength="169.38" lengthAdjust="spacingAndGlyphs">Tue, 19 Oct, 2021, 6:05 pm IST</text>
<text x="1758.00" y="252.00" font-size="12.4" fill="#000000" text-anchor="middle" textLength="13.28" lengthAdjust="spacingAndGlyphs">19</text>
<text x="1813.00" y="252.00" font-size="12.4" fill="#000000" text-anchor="middle" textLength="13.28" lengthAdjust="spacingAndGlyphs">10</text>
<text x="1868.00" y="252.00" font-size="12.4" fill="#000000" text-anchor="middle" textLength="26.56" lengthAdjust="spacingAndGlyphs">2021</text>
<text x="73.00" y="269.00" font-size="13.3" fill="#000000" text-anchor="middle" textLength="20.91" lengthAdjust="spacingAndGlyphs">404</text>
<text x="171.00" y="269.00" font-size="13.3" fill="#000000" text-anchor="middle" textLength="11.76" lengthAdjust="spacingAndGlyphs">M</text>
<text x="273.50" y="269.00" font-size="13.3" fill="#000000" text-anchor="middle" textLength="39.71" lengthAdjust="spacingAndGlyphs">Minam</text>
<text x="410.50" y="269.00" font-size="13.3" fill="#000000" text-anchor="middle" textLength="56.67" lengthAdjust="spacingAndGlyphs">PASIGHAT,</text>
<text x="558.50" y="269.00" font-size="13.3" fill="#000000" text-anchor="middle" textLength="126.17" lengthAdjust="spacingAndGlyphs">ARUNACHAL PRADESH</text>
<g clip-path="url(#cg)">
<text x="790.00" y="269.00" font-size="13.3" fill="#000000" text-anchor="middle" textLength="328.09" lengthAdjust="spacingAndGlyphs">le Lipstick Cases with Mirror, Handy and Compact Handcraf</text>
</g>
<text x="986.00" y="269.00" font-size="13.3" fill="#000000" text-anchor="middle" textLength="6.97" lengthAdjust="spacingAndGlyphs">1</text>
<path d="M1051.46,260.50 H1058.46 M1051.46,262.50 H1058.46 M1051.86,264.50 H1053.66 Q1056.36,264.50 1056.36,262.50 M1053.06,264.50 L1057.86,269.00" fill="none" stroke="#000" stroke-width="1.0" shape-rendering="geometricPrecision"/>
<text x="1058.33" y="269.00" font-size="13.3" fill="#000000" textLength="38.32" lengthAdjust="spacingAndGlyphs">449.00</text>
<text x="1293.00" y="269.00" font-size="13.3" fill="#000000" text-anchor="middle" textLength="103.29" lengthAdjust="spacingAndGlyphs">Delivered to buyer</text>
<text x="1380.00" y="269.00" font-size="13.3" fill="#000000" text-anchor="middle" textLength="34.85" lengthAdjust="spacingAndGlyphs">83743</text>
<text x="1434.00" y="269.00" font-size="13.3" fill="#000000" text-anchor="middle" textLength="45.64" lengthAdjust="spacingAndGlyphs">14 (S14)</text>
<text x="1495.50" y="269.00" font-size="13.3" fill="#000000" text-anchor="middle" textLength="74.72" lengthAdjust="spacingAndGlyphs">Northeastern</text>
<text x="1631.50" y="269.00" font-size="13.3" fill="#000000" text-anchor="middle" textLength="178.89" lengthAdjust="spacingAndGlyphs">Sun, 28 Nov, 2021, 10:20 pm IST</text>
<text x="1758.00" y="270.00" font-size="12.4" fill="#000000" text-anchor="middle" textLength="13.28" lengthAdjust="spacingAndGlyphs">28</text>
<text x="1813.00" y="270.00" font-size="12.4" fill="#000000" text-anchor="middle" textLength="13.28" lengthAdjust="spacingAndGlyphs">11</text>
<text x="1868.00" y="270.00" font-size="12.4" fill="#000000" text-anchor="middle" textLength="26.56" lengthAdjust="spacingAndGlyphs">2021</text>
<text x="73.00" y="287.00" font-size="13.3" fill="#000000" text-anchor="middle" textLength="20.91" lengthAdjust="spacingAndGlyphs">171</text>
<text x="171.00" y="287.00" font-size="13.3" fill="#000000" text-anchor="middle" textLength="7.96" lengthAdjust="spacingAndGlyphs">A</text>
<text x="273.50" y="287.00" font-size="13.3" fill="#000000" text-anchor="middle" textLength="28.48" lengthAdjust="spacingAndGlyphs">Anku</text>
<text x="410.50" y="287.00" font-size="13.3" fill="#000000" text-anchor="middle" textLength="66.11" lengthAdjust="spacingAndGlyphs">GUWAHATI,</text>
<text x="558.50" y="287.00" font-size="13.3" fill="#000000" text-anchor="middle" textLength="40.20" lengthAdjust="spacingAndGlyphs">ASSAM</text>
<g clip-path="url(#cg)">
<text x="790.00" y="287.00" font-size="13.3" fill="#000000" text-anchor="middle" textLength="332.44" lengthAdjust="spacingAndGlyphs">allet with Cash, Card and Coin Compartments | Jet Black Ge</text>
</g>
<text x="986.00" y="287.00" font-size="13.3" fill="#000000" text-anchor="middle" textLength="6.97" lengthAdjust="spacingAndGlyphs">1</text>
<path d="M1051.46,278.50 H1058.46 M1051.46,280.50 H1058.46 M1051.86,282.50 H1053.66 Q1056.36,282.50 1056.36,280.50 M1053.06,282.50 L1057.86,287.00" fill="none" stroke="#000" stroke-width="1.0" shape-rendering="geometricPrecision"/>
<text x="1058.33" y="287.00" font-size="13.3" fill="#000000" textLength="38.32" lengthAdjust="spacingAndGlyphs">649.00</text>
<text x="1183.50" y="287.00" font-size="13.3" fill="#000000" text-anchor="middle" textLength="94.68" lengthAdjust="spacingAndGlyphs">Cash On Delivery</text>
<text x="1293.00" y="287.00" font-size="13.3" fill="#000000" text-anchor="middle" textLength="103.29" lengthAdjust="spacingAndGlyphs">Delivered to buyer</text>
<text x="1380.00" y="287.00" font-size="13.3" fill="#000000" text-anchor="middle" textLength="34.85" lengthAdjust="spacingAndGlyphs">78438</text>
<text x="1434.00" y="287.00" font-size="13.3" fill="#000000" text-anchor="middle" textLength="45.64" lengthAdjust="spacingAndGlyphs">16 (S16)</text>
<text x="1495.50" y="287.00" font-size="13.3" fill="#000000" text-anchor="middle" textLength="74.72" lengthAdjust="spacingAndGlyphs">Northeastern</text>
<text x="1631.50" y="287.00" font-size="13.3" fill="#000000" text-anchor="middle" textLength="169.98" lengthAdjust="spacingAndGlyphs">Thu, 7 Oct, 2021, 10:04 am IST</text>
<text x="1758.00" y="288.00" font-size="12.4" fill="#000000" text-anchor="middle" textLength="6.64" lengthAdjust="spacingAndGlyphs">7</text>
<text x="1813.00" y="288.00" font-size="12.4" fill="#000000" text-anchor="middle" textLength="13.28" lengthAdjust="spacingAndGlyphs">10</text>
<text x="1868.00" y="288.00" font-size="12.4" fill="#000000" text-anchor="middle" textLength="26.56" lengthAdjust="spacingAndGlyphs">2021</text>
<text x="73.00" y="305.00" font-size="13.3" fill="#000000" text-anchor="middle" textLength="20.91" lengthAdjust="spacingAndGlyphs">404</text>
<text x="171.00" y="305.00" font-size="13.3" fill="#000000" text-anchor="middle" textLength="11.76" lengthAdjust="spacingAndGlyphs">M</text>
<text x="273.50" y="305.00" font-size="13.3" fill="#000000" text-anchor="middle" textLength="101.02" lengthAdjust="spacingAndGlyphs">swagata13051978</text>
<text x="410.50" y="305.00" font-size="13.3" fill="#000000" text-anchor="middle" textLength="50.17" lengthAdjust="spacingAndGlyphs">SILCHAR,</text>
<text x="558.50" y="305.00" font-size="13.3" fill="#000000" text-anchor="middle" textLength="40.20" lengthAdjust="spacingAndGlyphs">ASSAM</text>
<g clip-path="url(#cg)">
<text x="790.00" y="305.00" font-size="13.3" fill="#000000" text-anchor="middle" textLength="329.39" lengthAdjust="spacingAndGlyphs">ar Jewelry Box with Mirror | Button Closure Multiple Utility</text>
</g>
<text x="986.00" y="305.00" font-size="13.3" fill="#000000" text-anchor="middle" textLength="6.97" lengthAdjust="spacingAndGlyphs">1</text>
<path d="M1051.46,296.50 H1058.46 M1051.46,298.50 H1058.46 M1051.86,300.50 H1053.66 Q1056.36,300.50 1056.36,298.50 M1053.06,300.50 L1057.86,305.00" fill="none" stroke="#000" stroke-width="1.0" shape-rendering="geometricPrecision"/>
<text x="1058.33" y="305.00" font-size="13.3" fill="#000000" textLength="38.32" lengthAdjust="spacingAndGlyphs">250.00</text>
<text x="1183.50" y="305.00" font-size="13.3" fill="#000000" text-anchor="middle" textLength="94.68" lengthAdjust="spacingAndGlyphs">Cash On Delivery</text>
<text x="1293.00" y="305.00" font-size="13.3" fill="#000000" text-anchor="middle" textLength="103.29" lengthAdjust="spacingAndGlyphs">Delivered to buyer</text>
<text x="1380.00" y="305.00" font-size="13.3" fill="#000000" text-anchor="middle" textLength="34.85" lengthAdjust="spacingAndGlyphs">78438</text>
<text x="1434.00" y="305.00" font-size="13.3" fill="#000000" text-anchor="middle" textLength="45.64" lengthAdjust="spacingAndGlyphs">16 (S16)</text>
<text x="1495.50" y="305.00" font-size="13.3" fill="#000000" text-anchor="middle" textLength="74.72" lengthAdjust="spacingAndGlyphs">Northeastern</text>
<text x="1631.50" y="305.00" font-size="13.3" fill="#000000" text-anchor="middle" textLength="162.41" lengthAdjust="spacingAndGlyphs">Tue, 5 Oct, 2021, 8:53 pm IST</text>
<text x="1758.00" y="306.00" font-size="12.4" fill="#000000" text-anchor="middle" textLength="6.64" lengthAdjust="spacingAndGlyphs">5</text>
<text x="1813.00" y="306.00" font-size="12.4" fill="#000000" text-anchor="middle" textLength="13.28" lengthAdjust="spacingAndGlyphs">10</text>
<text x="1868.00" y="306.00" font-size="12.4" fill="#000000" text-anchor="middle" textLength="26.56" lengthAdjust="spacingAndGlyphs">2021</text>
<text x="73.00" y="323.00" font-size="13.3" fill="#000000" text-anchor="middle" textLength="20.91" lengthAdjust="spacingAndGlyphs">405</text>
<text x="171.00" y="323.00" font-size="13.3" fill="#000000" text-anchor="middle" textLength="8.88" lengthAdjust="spacingAndGlyphs">N</text>
<text x="273.50" y="323.00" font-size="13.3" fill="#000000" text-anchor="middle" textLength="19.37" lengthAdjust="spacingAndGlyphs">Jitu</text>
<text x="410.50" y="323.00" font-size="13.3" fill="#000000" text-anchor="middle" textLength="66.11" lengthAdjust="spacingAndGlyphs">GUWAHATI,</text>
<text x="558.50" y="323.00" font-size="13.3" fill="#000000" text-anchor="middle" textLength="40.20" lengthAdjust="spacingAndGlyphs">ASSAM</text>
<g clip-path="url(#cg)">
<text x="790.00" y="323.00" font-size="13.3" fill="#000000" text-anchor="middle" textLength="336.78" lengthAdjust="spacingAndGlyphs">Clutch Purse with Zipper Compartments | Polka Dot Block Pr</text>
</g>
<text x="986.00" y="323.00" font-size="13.3" fill="#000000" text-anchor="middle" textLength="6.97" lengthAdjust="spacingAndGlyphs">1</text>
<text x="1183.50" y="323.00" font-size="13.3" fill="#000000" text-anchor="middle" textLength="94.68" lengthAdjust="spacingAndGlyphs">Cash On Delivery</text>
<text x="1293.00" y="323.00" font-size="13.3" fill="#000000" text-anchor="middle" textLength="100.01" lengthAdjust="spacingAndGlyphs">Returned to seller</text>
<text x="1380.00" y="323.00" font-size="13.3" fill="#000000" text-anchor="middle" textLength="34.85" lengthAdjust="spacingAndGlyphs">78438</text>
<text x="1434.00" y="323.00" font-size="13.3" fill="#000000" text-anchor="middle" textLength="45.64" lengthAdjust="spacingAndGlyphs">16 (S16)</text>
<text x="1495.50" y="323.00" font-size="13.3" fill="#000000" text-anchor="middle" textLength="74.72" lengthAdjust="spacingAndGlyphs">Northeastern</text>
<text x="1631.50" y="323.00" font-size="13.3" fill="#000000" text-anchor="middle" textLength="177.20" lengthAdjust="spacingAndGlyphs">Sun, 31 Oct, 2021, 11:28 pm IST</text>
<text x="1758.00" y="324.00" font-size="12.4" fill="#000000" text-anchor="middle" textLength="13.28" lengthAdjust="spacingAndGlyphs">31</text>
<text x="1813.00" y="324.00" font-size="12.4" fill="#000000" text-anchor="middle" textLength="13.28" lengthAdjust="spacingAndGlyphs">10</text>
<text x="1868.00" y="324.00" font-size="12.4" fill="#000000" text-anchor="middle" textLength="26.56" lengthAdjust="spacingAndGlyphs">2021</text>
<text x="73.00" y="341.00" font-size="13.3" fill="#000000" text-anchor="middle" textLength="20.91" lengthAdjust="spacingAndGlyphs">407</text>
<text x="171.00" y="341.00" font-size="13.3" fill="#000000" text-anchor="middle" textLength="7.10" lengthAdjust="spacingAndGlyphs">P</text>
<text x="273.50" y="341.00" font-size="13.3" fill="#000000" text-anchor="middle" textLength="24.17" lengthAdjust="spacingAndGlyphs">Jolly</text>
<text x="410.50" y="341.00" font-size="13.3" fill="#000000" text-anchor="middle" textLength="66.11" lengthAdjust="spacingAndGlyphs">GUWAHATI,</text>
<text x="558.50" y="341.00" font-size="13.3" fill="#000000" text-anchor="middle" textLength="40.20" lengthAdjust="spacingAndGlyphs">ASSAM</text>
<g clip-path="url(#cg)">
<text x="790.00" y="341.00" font-size="13.3" fill="#000000" text-anchor="middle" textLength="333.59" lengthAdjust="spacingAndGlyphs">ockets and Adjustable Strap | Shantiniketan Block Print Cros</text>
</g>
<text x="986.00" y="341.00" font-size="13.3" fill="#000000" text-anchor="middle" textLength="6.97" lengthAdjust="spacingAndGlyphs">1</text>
<path d="M1046.26,332.50 H1053.26 M1046.26,334.50 H1053.26 M1046.66,336.50 H1048.46 Q1051.16,336.50 1051.16,334.50 M1047.86,336.50 L1052.66,341.00" fill="none" stroke="#000" stroke-width="1.0" shape-rendering="geometricPrecision"/>
<text x="1053.13" y="341.00" font-size="13.3" fill="#000000" textLength="48.72" lengthAdjust="spacingAndGlyphs">1,099.00</text>
<text x="1183.50" y="341.00" font-size="13.3" fill="#000000" text-anchor="middle" textLength="94.68" lengthAdjust="spacingAndGlyphs">Cash On Delivery</text>
<text x="1293.00" y="341.00" font-size="13.3" fill="#000000" text-anchor="middle" textLength="103.29" lengthAdjust="spacingAndGlyphs">Delivered to buyer</text>
<text x="1380.00" y="341.00" font-size="13.3" fill="#000000" text-anchor="middle" textLength="34.85" lengthAdjust="spacingAndGlyphs">78438</text>
<text x="1434.00" y="341.00" font-size="13.3" fill="#000000" text-anchor="middle" textLength="45.64" lengthAdjust="spacingAndGlyphs">16 (S16)</text>
<text x="1495.50" y="341.00" font-size="13.3" fill="#000000" text-anchor="middle" textLength="74.72" lengthAdjust="spacingAndGlyphs">Northeastern</text>
<text x="1631.50" y="341.00" font-size="13.3" fill="#000000" text-anchor="middle" textLength="172.98" lengthAdjust="spacingAndGlyphs">Fri, 13 Aug, 2021, 12:02 pm IST</text>
<text x="1758.00" y="342.00" font-size="12.4" fill="#000000" text-anchor="middle" textLength="13.28" lengthAdjust="spacingAndGlyphs">13</text>
<text x="1813.00" y="342.00" font-size="12.4" fill="#000000" text-anchor="middle" textLength="6.64" lengthAdjust="spacingAndGlyphs">8</text>
<text x="1868.00" y="342.00" font-size="12.4" fill="#000000" text-anchor="middle" textLength="26.56" lengthAdjust="spacingAndGlyphs">2021</text>
<text x="73.00" y="359.00" font-size="13.3" fill="#000000" text-anchor="middle" textLength="20.91" lengthAdjust="spacingAndGlyphs">405</text>
<text x="171.00" y="359.00" font-size="13.3" fill="#000000" text-anchor="middle" textLength="8.88" lengthAdjust="spacingAndGlyphs">N</text>
<text x="273.50" y="359.00" font-size="13.3" fill="#000000" text-anchor="middle" textLength="39.13" lengthAdjust="spacingAndGlyphs">Monali</text>
<text x="410.50" y="359.00" font-size="13.3" fill="#000000" text-anchor="middle" textLength="41.65" lengthAdjust="spacingAndGlyphs">SIWAN,</text>
<text x="558.50" y="359.00" font-size="13.3" fill="#000000" text-anchor="middle" textLength="34.93" lengthAdjust="spacingAndGlyphs">BIHAR</text>
<g clip-path="url(#cg)">
<text x="790.00" y="359.00" font-size="13.3" fill="#000000" text-anchor="middle" textLength="334.13" lengthAdjust="spacingAndGlyphs">ntiniketan Leather Ganesh Ji Piggy Coin Bank for Kids/Adults</text>
</g>
<text x="986.00" y="359.00" font-size="13.3" fill="#000000" text-anchor="middle" textLength="6.97" lengthAdjust="spacingAndGlyphs">1</text>
<path d="M1051.46,350.50 H1058.46 M1051.46,352.50 H1058.46 M1051.86,354.50 H1053.66 Q1056.36,354.50 1056.36,352.50 M1053.06,354.50 L1057.86,359.00" fill="none" stroke="#000" stroke-width="1.0" shape-rendering="geometricPrecision"/>
<text x="1058.33" y="359.00" font-size="13.3" fill="#000000" textLength="38.32" lengthAdjust="spacingAndGlyphs">549.00</text>
<text x="1183.50" y="359.00" font-size="13.3" fill="#000000" text-anchor="middle" textLength="94.68" lengthAdjust="spacingAndGlyphs">Cash On Delivery</text>
<text x="1293.00" y="359.00" font-size="13.3" fill="#000000" text-anchor="middle" textLength="103.29" lengthAdjust="spacingAndGlyphs">Delivered to buyer</text>
<text x="1380.00" y="359.00" font-size="13.3" fill="#000000" text-anchor="middle" textLength="34.85" lengthAdjust="spacingAndGlyphs">94163</text>
<text x="1434.00" y="359.00" font-size="13.3" fill="#000000" text-anchor="middle" textLength="45.64" lengthAdjust="spacingAndGlyphs">12 (S12)</text>
<text x="1495.50" y="359.00" font-size="13.3" fill="#000000" text-anchor="middle" textLength="41.61" lengthAdjust="spacingAndGlyphs">Eastern</text>
<text x="1631.50" y="359.00" font-size="13.3" fill="#000000" text-anchor="middle" textLength="165.32" lengthAdjust="spacingAndGlyphs">Fri, 17 Dec, 2021, 3:57 pm IST</text>
<text x="1758.00" y="360.00" font-size="12.4" fill="#000000" text-anchor="middle" textLength="13.28" lengthAdjust="spacingAndGlyphs">17</text>
<text x="1813.00" y="360.00" font-size="12.4" fill="#000000" text-anchor="middle" textLength="13.28" lengthAdjust="spacingAndGlyphs">12</text>
<text x="1868.00" y="360.00" font-size="12.4" fill="#000000" text-anchor="middle" textLength="26.56" lengthAdjust="spacingAndGlyphs">2021</text>
<text x="73.00" y="377.00" font-size="13.3" fill="#000000" text-anchor="middle" textLength="20.91" lengthAdjust="spacingAndGlyphs">405</text>
<text x="171.00" y="377.00" font-size="13.3" fill="#000000" text-anchor="middle" textLength="8.88" lengthAdjust="spacingAndGlyphs">N</text>
<text x="273.50" y="377.00" font-size="13.3" fill="#000000" text-anchor="middle" textLength="18.64" lengthAdjust="spacingAndGlyphs">Mr.</text>
<text x="410.50" y="377.00" font-size="13.3" fill="#000000" text-anchor="middle" textLength="80.75" lengthAdjust="spacingAndGlyphs">CHANDIGARH,</text>
<text x="558.50" y="377.00" font-size="13.3" fill="#000000" text-anchor="middle" textLength="77.32" lengthAdjust="spacingAndGlyphs">CHANDIGARH</text>
<g clip-path="url(#cg)">
<text x="790.00" y="377.00" font-size="13.3" fill="#000000" text-anchor="middle" textLength="330.42" lengthAdjust="spacingAndGlyphs">k | Block Printed West Bengal Handicrafts (Shantiniketan Ar</text>
</g>
<text x="986.00" y="377.00" font-size="13.3" fill="#000000" text-anchor="middle" textLength="6.97" lengthAdjust="spacingAndGlyphs">1</text>
<path d="M1051.46,368.50 H1058.46 M1051.46,370.50 H1058.46 M1051.86,372.50 H1053.66 Q1056.36,372.50 1056.36,370.50 M1053.06,372.50 L1057.86,377.00" fill="none" stroke="#000" stroke-width="1.0" shape-rendering="geometricPrecision"/>
<text x="1058.33" y="377.00" font-size="13.3" fill="#000000" textLength="38.32" lengthAdjust="spacingAndGlyphs">449.00</text>
<text x="1293.00" y="377.00" font-size="13.3" fill="#000000" text-anchor="middle" textLength="103.29" lengthAdjust="spacingAndGlyphs">Delivered to buyer</text>
<text x="1380.00" y="377.00" font-size="13.3" fill="#000000" text-anchor="middle" textLength="20.91" lengthAdjust="spacingAndGlyphs">114</text>
<text x="1434.00" y="377.00" font-size="13.3" fill="#000000" text-anchor="middle" textLength="47.88" lengthAdjust="spacingAndGlyphs">35 (UT7)</text>
<text x="1495.50" y="377.00" font-size="13.3" fill="#000000" text-anchor="middle" textLength="51.61" lengthAdjust="spacingAndGlyphs">Northern</text>
<text x="1631.50" y="377.00" font-size="13.3" fill="#000000" text-anchor="middle" textLength="173.93" lengthAdjust="spacingAndGlyphs">Wed, 19 Jan, 2022, 7:13 pm IST</text>
<text x="1758.00" y="378.00" font-size="12.4" fill="#000000" text-anchor="middle" textLength="13.28" lengthAdjust="spacingAndGlyphs">19</text>
<text x="1813.00" y="378.00" font-size="12.4" fill="#000000" text-anchor="middle" textLength="6.64" lengthAdjust="spacingAndGlyphs">1</text>
<text x="1868.00" y="378.00" font-size="12.4" fill="#000000" text-anchor="middle" textLength="26.56" lengthAdjust="spacingAndGlyphs">2022</text>
<text x="73.00" y="395.00" font-size="13.3" fill="#000000" text-anchor="middle" textLength="20.91" lengthAdjust="spacingAndGlyphs">406</text>
<text x="171.00" y="395.00" font-size="13.3" fill="#000000" text-anchor="middle" textLength="9.10" lengthAdjust="spacingAndGlyphs">O</text>
<text x="273.50" y="395.00" font-size="13.3" fill="#000000" text-anchor="middle" textLength="33.97" lengthAdjust="spacingAndGlyphs">Shakti</text>
<text x="410.50" y="395.00" font-size="13.3" fill="#000000" text-anchor="middle" textLength="80.75" lengthAdjust="spacingAndGlyphs">CHANDIGARH,</text>
<text x="558.50" y="395.00" font-size="13.3" fill="#000000" text-anchor="middle" textLength="77.32" lengthAdjust="spacingAndGlyphs">CHANDIGARH</text>
<g clip-path="url(#cg)">
<text x="790.00" y="395.00" font-size="13.3" fill="#000000" text-anchor="middle" textLength="330.42" lengthAdjust="spacingAndGlyphs">k | Block Printed West Bengal Handicrafts (Shantiniketan Ar</text>
</g>
<text x="986.00" y="395.00" font-size="13.3" fill="#000000" text-anchor="middle" textLength="6.97" lengthAdjust="spacingAndGlyphs">1</text>
<path d="M1051.46,386.50 H1058.46 M1051.46,388.50 H1058.46 M1051.86,390.50 H1053.66 Q1056.36,390.50 1056.36,388.50 M1053.06,390.50 L1057.86,395.00" fill="none" stroke="#000" stroke-width="1.0" shape-rendering="geometricPrecision"/>
<text x="1058.33" y="395.00" font-size="13.3" fill="#000000" textLength="38.32" lengthAdjust="spacingAndGlyphs">449.00</text>
<text x="1293.00" y="395.00" font-size="13.3" fill="#000000" text-anchor="middle" textLength="103.29" lengthAdjust="spacingAndGlyphs">Delivered to buyer</text>
<text x="1380.00" y="395.00" font-size="13.3" fill="#000000" text-anchor="middle" textLength="20.91" lengthAdjust="spacingAndGlyphs">114</text>
<text x="1434.00" y="395.00" font-size="13.3" fill="#000000" text-anchor="middle" textLength="47.88" lengthAdjust="spacingAndGlyphs">35 (UT7)</text>
<text x="1495.50" y="395.00" font-size="13.3" fill="#000000" text-anchor="middle" textLength="51.61" lengthAdjust="spacingAndGlyphs">Northern</text>
<text x="1631.50" y="395.00" font-size="13.3" fill="#000000" text-anchor="middle" textLength="171.82" lengthAdjust="spacingAndGlyphs">Sun, 12 Dec, 2021, 7:09 pm IST</text>
<text x="1758.00" y="396.00" font-size="12.4" fill="#000000" text-anchor="middle" textLength="13.28" lengthAdjust="spacingAndGlyphs">12</text>
<text x="1813.00" y="396.00" font-size="12.4" fill="#000000" text-anchor="middle" textLength="13.28" lengthAdjust="spacingAndGlyphs">12</text>
<text x="1868.00" y="396.00" font-size="12.4" fill="#000000" text-anchor="middle" textLength="26.56" lengthAdjust="spacingAndGlyphs">2021</text>
<text x="73.00" y="413.00" font-size="13.3" fill="#000000" text-anchor="middle" textLength="20.91" lengthAdjust="spacingAndGlyphs">408</text>
<text x="171.00" y="413.00" font-size="13.3" fill="#000000" text-anchor="middle" textLength="9.25" lengthAdjust="spacingAndGlyphs">Q</text>
<text x="273.50" y="413.00" font-size="13.3" fill="#000000" text-anchor="middle" textLength="34.37" lengthAdjust="spacingAndGlyphs">Ashna</text>
<text x="410.50" y="413.00" font-size="13.3" fill="#000000" text-anchor="middle" textLength="80.75" lengthAdjust="spacingAndGlyphs">CHANDIGARH,</text>
<text x="558.50" y="413.00" font-size="13.3" fill="#000000" text-anchor="middle" textLength="77.32" lengthAdjust="spacingAndGlyphs">CHANDIGARH</text>
<g clip-path="url(#cg)">
<text x="790.00" y="413.00" font-size="13.3" fill="#000000" text-anchor="middle" textLength="328.09" lengthAdjust="spacingAndGlyphs">le Lipstick Cases with Mirror, Handy and Compact Handcraf</text>
</g>
<text x="986.00" y="413.00" font-size="13.3" fill="#000000" text-anchor="middle" textLength="6.97" lengthAdjust="spacingAndGlyphs">1</text>
<text x="1293.00" y="413.00" font-size="13.3" fill="#000000" text-anchor="middle" textLength="103.29" lengthAdjust="spacingAndGlyphs">Delivered to buyer</text>
<text x="1380.00" y="413.00" font-size="13.3" fill="#000000" text-anchor="middle" textLength="20.91" lengthAdjust="spacingAndGlyphs">114</text>
<text x="1434.00" y="413.00" font-size="13.3" fill="#000000" text-anchor="middle" textLength="47.88" lengthAdjust="spacingAndGlyphs">35 (UT7)</text>
<text x="1495.50" y="413.00" font-size="13.3" fill="#000000" text-anchor="middle" textLength="51.61" lengthAdjust="spacingAndGlyphs">Northern</text>
<text x="1631.50" y="413.00" font-size="13.3" fill="#000000" text-anchor="middle" textLength="172.44" lengthAdjust="spacingAndGlyphs">Sun, 18 Jul, 2021, 10:38 pm IST</text>
<text x="1758.00" y="414.00" font-size="12.4" fill="#000000" text-anchor="middle" textLength="13.28" lengthAdjust="spacingAndGlyphs">18</text>
<text x="1813.00" y="414.00" font-size="12.4" fill="#000000" text-anchor="middle" textLength="6.64" lengthAdjust="spacingAndGlyphs">7</text>
<text x="1868.00" y="414.00" font-size="12.4" fill="#000000" text-anchor="middle" textLength="26.56" lengthAdjust="spacingAndGlyphs">2021</text>
<text x="73.00" y="431.00" font-size="13.3" fill="#000000" text-anchor="middle" textLength="20.91" lengthAdjust="spacingAndGlyphs">403</text>
<text x="171.00" y="431.00" font-size="13.3" fill="#000000" text-anchor="middle" textLength="5.78" lengthAdjust="spacingAndGlyphs">L</text>
<text x="273.50" y="431.00" font-size="13.3" fill="#000000" text-anchor="middle" textLength="56.79" lengthAdjust="spacingAndGlyphs">RishuGarg</text>
<text x="410.50" y="431.00" font-size="13.3" fill="#000000" text-anchor="middle" textLength="77.32" lengthAdjust="spacingAndGlyphs">CHANDIGARH</text>
<text x="558.50" y="431.00" font-size="13.3" fill="#000000" text-anchor="middle" textLength="80.75" lengthAdjust="spacingAndGlyphs">CHANDIGARH,</text>
<g clip-path="url(#cg)">
<text x="790.00" y="431.00" font-size="13.3" fill="#000000" text-anchor="middle" textLength="334.28" lengthAdjust="spacingAndGlyphs">ound Jewelry Boxes | Button Closure Multiple Utility Case (S</text>
</g>
<text x="986.00" y="431.00" font-size="13.3" fill="#000000" text-anchor="middle" textLength="6.97" lengthAdjust="spacingAndGlyphs">1</text>
<path d="M1051.46,422.50 H1058.46 M1051.46,424.50 H1058.46 M1051.86,426.50 H1053.66 Q1056.36,426.50 1056.36,424.50 M1053.06,426.50 L1057.86,431.00" fill="none" stroke="#000" stroke-width="1.0" shape-rendering="geometricPrecision"/>
<text x="1058.33" y="431.00" font-size="13.3" fill="#000000" textLength="38.32" lengthAdjust="spacingAndGlyphs">475.00</text>
<text x="1183.50" y="431.00" font-size="13.3" fill="#000000" text-anchor="middle" textLength="94.68" lengthAdjust="spacingAndGlyphs">Cash On Delivery</text>
<text x="1293.00" y="431.00" font-size="13.3" fill="#000000" text-anchor="middle" textLength="103.29" lengthAdjust="spacingAndGlyphs">Delivered to buyer</text>
<text x="1380.00" y="431.00" font-size="13.3" fill="#000000" text-anchor="middle" textLength="20.91" lengthAdjust="spacingAndGlyphs">114</text>
<text x="1434.00" y="431.00" font-size="13.3" fill="#000000" text-anchor="middle" textLength="47.88" lengthAdjust="spacingAndGlyphs">35 (UT7)</text>
<text x="1495.50" y="431.00" font-size="13.3" fill="#000000" text-anchor="middle" textLength="51.61" lengthAdjust="spacingAndGlyphs">Northern</text>
<text x="1631.50" y="431.00" font-size="13.3" fill="#000000" text-anchor="middle" textLength="178.24" lengthAdjust="spacingAndGlyphs">Thu, 10 Feb, 2022, 11:22 pm IST</text>
<text x="1758.00" y="432.00" font-size="12.4" fill="#000000" text-anchor="middle" textLength="13.28" lengthAdjust="spacingAndGlyphs">10</text>
<text x="1813.00" y="432.00" font-size="12.4" fill="#000000" text-anchor="middle" textLength="6.64" lengthAdjust="spacingAndGlyphs">2</text>
<text x="1868.00" y="432.00" font-size="12.4" fill="#000000" text-anchor="middle" textLength="26.56" lengthAdjust="spacingAndGlyphs">2022</text>
<text x="73.00" y="449.00" font-size="13.3" fill="#000000" text-anchor="middle" textLength="20.91" lengthAdjust="spacingAndGlyphs">171</text>
<text x="171.00" y="449.00" font-size="13.3" fill="#000000" text-anchor="middle" textLength="7.96" lengthAdjust="spacingAndGlyphs">A</text>
<text x="273.50" y="449.00" font-size="13.3" fill="#000000" text-anchor="middle" textLength="67.08" lengthAdjust="spacingAndGlyphs">A.Jayaprada</text>
<text x="410.50" y="449.00" font-size="13.3" fill="#000000" text-anchor="middle" textLength="34.19" lengthAdjust="spacingAndGlyphs">Bhilai,</text>
<text x="558.50" y="449.00" font-size="13.3" fill="#000000" text-anchor="middle" textLength="87.38" lengthAdjust="spacingAndGlyphs">CHHATTISGARH</text>
<g clip-path="url(#cg)">
<text x="790.00" y="449.00" font-size="13.3" fill="#000000" text-anchor="middle" textLength="333.59" lengthAdjust="spacingAndGlyphs">ockets and Adjustable Strap | Shantiniketan Block Print Cros</text>
</g>
<text x="986.00" y="449.00" font-size="13.3" fill="#000000" text-anchor="middle" textLength="6.97" lengthAdjust="spacingAndGlyphs">1</text>
<path d="M1046.26,440.50 H1053.26 M1046.26,442.50 H1053.26 M1046.66,444.50 H1048.46 Q1051.16,444.50 1051.16,442.50 M1047.86,444.50 L1052.66,449.00" fill="none" stroke="#000" stroke-width="1.0" shape-rendering="geometricPrecision"/>
<text x="1053.13" y="449.00" font-size="13.3" fill="#000000" textLength="48.72" lengthAdjust="spacingAndGlyphs">1,099.00</text>
<text x="1293.00" y="449.00" font-size="13.3" fill="#000000" text-anchor="middle" textLength="103.29" lengthAdjust="spacingAndGlyphs">Delivered to buyer</text>
<text x="1380.00" y="449.00" font-size="13.3" fill="#000000" text-anchor="middle" textLength="41.81" lengthAdjust="spacingAndGlyphs">135191</text>
<text x="1434.00" y="449.00" font-size="13.3" fill="#000000" text-anchor="middle" textLength="31.70" lengthAdjust="spacingAndGlyphs">9 (S9)</text>
<text x="1495.50" y="449.00" font-size="13.3" fill="#000000" text-anchor="middle" textLength="40.13" lengthAdjust="spacingAndGlyphs">Central</text>
<text x="1631.50" y="449.00" font-size="13.3" fill="#000000" text-anchor="middle" textLength="165.24" lengthAdjust="spacingAndGlyphs">Thu, 9 Dec, 2021, 6:55 pm IST</text>
<text x="1758.00" y="450.00" font-size="12.4" fill="#000000" text-anchor="middle" textLength="6.64" lengthAdjust="spacingAndGlyphs">9</text>
<text x="1813.00" y="450.00" font-size="12.4" fill="#000000" text-anchor="middle" textLength="13.28" lengthAdjust="spacingAndGlyphs">12</text>
<text x="1868.00" y="450.00" font-size="12.4" fill="#000000" text-anchor="middle" textLength="26.56" lengthAdjust="spacingAndGlyphs">2021</text>
<text x="73.00" y="467.00" font-size="13.3" fill="#000000" text-anchor="middle" textLength="20.91" lengthAdjust="spacingAndGlyphs">403</text>
<text x="171.00" y="467.00" font-size="13.3" fill="#000000" text-anchor="middle" textLength="5.78" lengthAdjust="spacingAndGlyphs">L</text>
<text x="273.50" y="467.00" font-size="13.3" fill="#000000" text-anchor="middle" textLength="23.80" lengthAdjust="spacingAndGlyphs">Ajay</text>
<text x="410.50" y="467.00" font-size="13.3" fill="#000000" text-anchor="middle" textLength="45.71" lengthAdjust="spacingAndGlyphs">RAIPUR,</text>
<text x="558.50" y="467.00" font-size="13.3" fill="#000000" text-anchor="middle" textLength="87.38" lengthAdjust="spacingAndGlyphs">CHHATTISGARH</text>
<g clip-path="url(#cg)">
<text x="790.00" y="467.00" font-size="13.3" fill="#000000" text-anchor="middle" textLength="326.81" lengthAdjust="spacingAndGlyphs">ck Printed West Bengal Handicrafts (Shantiniketan Art) | M</text>
</g>
<text x="986.00" y="467.00" font-size="13.3" fill="#000000" text-anchor="middle" textLength="6.97" lengthAdjust="spacingAndGlyphs">1</text>
<path d="M1051.46,458.50 H1058.46 M1051.46,460.50 H1058.46 M1051.86,462.50 H1053.66 Q1056.36,462.50 1056.36,460.50 M1053.06,462.50 L1057.86,467.00" fill="none" stroke="#000" stroke-width="1.0" shape-rendering="geometricPrecision"/>
<text x="1058.33" y="467.00" font-size="13.3" fill="#000000" textLength="38.32" lengthAdjust="spacingAndGlyphs">349.00</text>
<text x="1293.00" y="467.00" font-size="13.3" fill="#000000" text-anchor="middle" textLength="103.29" lengthAdjust="spacingAndGlyphs">Delivered to buyer</text>
<text x="1380.00" y="467.00" font-size="13.3" fill="#000000" text-anchor="middle" textLength="41.81" lengthAdjust="spacingAndGlyphs">135191</text>
<text x="1434.00" y="467.00" font-size="13.3" fill="#000000" text-anchor="middle" textLength="31.70" lengthAdjust="spacingAndGlyphs">9 (S9)</text>
<text x="1495.50" y="467.00" font-size="13.3" fill="#000000" text-anchor="middle" textLength="40.13" lengthAdjust="spacingAndGlyphs">Central</text>
<text x="1631.50" y="467.00" font-size="13.3" fill="#000000" text-anchor="middle" textLength="171.01" lengthAdjust="spacingAndGlyphs">Mon, 9 Aug, 2021, 4:47 pm IST</text>
<text x="1758.00" y="468.00" font-size="12.4" fill="#000000" text-anchor="middle" textLength="6.64" lengthAdjust="spacingAndGlyphs">9</text>
<text x="1813.00" y="468.00" font-size="12.4" fill="#000000" text-anchor="middle" textLength="6.64" lengthAdjust="spacingAndGlyphs">8</text>
<text x="1868.00" y="468.00" font-size="12.4" fill="#000000" text-anchor="middle" textLength="26.56" lengthAdjust="spacingAndGlyphs">2021</text>
<text x="73.00" y="485.00" font-size="13.3" fill="#000000" text-anchor="middle" textLength="20.91" lengthAdjust="spacingAndGlyphs">405</text>
<text x="171.00" y="485.00" font-size="13.3" fill="#000000" text-anchor="middle" textLength="8.88" lengthAdjust="spacingAndGlyphs">N</text>
<text x="273.50" y="485.00" font-size="13.3" fill="#000000" text-anchor="middle" textLength="42.62" lengthAdjust="spacingAndGlyphs">Noopur</text>
<text x="410.50" y="485.00" font-size="13.3" fill="#000000" text-anchor="middle" textLength="41.89" lengthAdjust="spacingAndGlyphs">KORBA,</text>
<text x="558.50" y="485.00" font-size="13.3" fill="#000000" text-anchor="middle" textLength="87.38" lengthAdjust="spacingAndGlyphs">CHHATTISGARH</text>
<g clip-path="url(#cg)">
<text x="790.00" y="485.00" font-size="13.3" fill="#000000" text-anchor="middle" textLength="328.09" lengthAdjust="spacingAndGlyphs">le Lipstick Cases with Mirror, Handy and Compact Handcraf</text>
</g>
<text x="986.00" y="485.00" font-size="13.3" fill="#000000" text-anchor="middle" textLength="6.97" lengthAdjust="spacingAndGlyphs">1</text>
<path d="M1051.46,476.50 H1058.46 M1051.46,478.50 H1058.46 M1051.86,480.50 H1053.66 Q1056.36,480.50 1056.36,478.50 M1053.06,480.50 L1057.86,485.00" fill="none" stroke="#000" stroke-width="1.0" shape-rendering="geometricPrecision"/>
<text x="1058.33" y="485.00" font-size="13.3" fill="#000000" textLength="38.32" lengthAdjust="spacingAndGlyphs">449.00</text>
<text x="1293.00" y="485.00" font-size="13.3" fill="#000000" text-anchor="middle" textLength="103.29" lengthAdjust="spacingAndGlyphs">Delivered to buyer</text>
<text x="1380.00" y="485.00" font-size="13.3" fill="#000000" text-anchor="middle" textLength="41.81" lengthAdjust="spacingAndGlyphs">135191</text>
<text x="1434.00" y="485.00" font-size="13.3" fill="#000000" text-anchor="middle" textLength="31.70" lengthAdjust="spacingAndGlyphs">9 (S9)</text>
<text x="1495.50" y="485.00" font-size="13.3" fill="#000000" text-anchor="middle" textLength="40.13" lengthAdjust="spacingAndGlyphs">Central</text>
<text x="1631.50" y="485.00" font-size="13.3" fill="#000000" text-anchor="middle" textLength="176.02" lengthAdjust="spacingAndGlyphs">Thu, 23 Sept, 2021, 3:19 pm IST</text>
<text x="1758.00" y="486.00" font-size="12.4" fill="#000000" text-anchor="middle" textLength="13.28" lengthAdjust="spacingAndGlyphs">23</text>
<text x="1813.00" y="486.00" font-size="12.4" fill="#000000" text-anchor="middle" textLength="6.64" lengthAdjust="spacingAndGlyphs">9</text>
<text x="1868.00" y="486.00" font-size="12.4" fill="#000000" text-anchor="middle" textLength="26.56" lengthAdjust="spacingAndGlyphs">2021</text>
<text x="73.00" y="503.00" font-size="13.3" fill="#000000" text-anchor="middle" textLength="20.91" lengthAdjust="spacingAndGlyphs">407</text>
<text x="171.00" y="503.00" font-size="13.3" fill="#000000" text-anchor="middle" textLength="7.10" lengthAdjust="spacingAndGlyphs">P</text>
<text x="273.50" y="503.00" font-size="13.3" fill="#000000" text-anchor="middle" textLength="68.60" lengthAdjust="spacingAndGlyphs">Harsimranjit</text>
<text x="410.50" y="503.00" font-size="13.3" fill="#000000" text-anchor="middle" textLength="69.50" lengthAdjust="spacingAndGlyphs">JAGDALPUR,</text>
<text x="558.50" y="503.00" font-size="13.3" fill="#000000" text-anchor="middle" textLength="87.38" lengthAdjust="spacingAndGlyphs">CHHATTISGARH</text>
<g clip-path="url(#cg)">
<text x="790.00" y="503.00" font-size="13.3" fill="#000000" text-anchor="middle" textLength="334.28" lengthAdjust="spacingAndGlyphs">ound Jewelry Boxes | Button Closure Multiple Utility Case (S</text>
</g>
<text x="986.00" y="503.00" font-size="13.3" fill="#000000" text-anchor="middle" textLength="6.97" lengthAdjust="spacingAndGlyphs">1</text>
<path d="M1051.46,494.50 H1058.46 M1051.46,496.50 H1058.46 M1051.86,498.50 H1053.66 Q1056.36,498.50 1056.36,496.50 M1053.06,498.50 L1057.86,503.00" fill="none" stroke="#000" stroke-width="1.0" shape-rendering="geometricPrecision"/>
<text x="1058.33" y="503.00" font-size="13.3" fill="#000000" textLength="38.32" lengthAdjust="spacingAndGlyphs">399.00</text>
<text x="1293.00" y="503.00" font-size="13.3" fill="#000000" text-anchor="middle" textLength="103.29" lengthAdjust="spacingAndGlyphs">Delivered to buyer</text>
<text x="1380.00" y="503.00" font-size="13.3" fill="#000000" text-anchor="middle" textLength="41.81" lengthAdjust="spacingAndGlyphs">135191</text>
<text x="1434.00" y="503.00" font-size="13.3" fill="#000000" text-anchor="middle" textLength="31.70" lengthAdjust="spacingAndGlyphs">9 (S9)</text>
<text x="1495.50" y="503.00" font-size="13.3" fill="#000000" text-anchor="middle" textLength="40.13" lengthAdjust="spacingAndGlyphs">Central</text>
<text x="1631.50" y="503.00" font-size="13.3" fill="#000000" text-anchor="middle" textLength="177.20" lengthAdjust="spacingAndGlyphs">Sun, 10 Oct, 2021, 11:02 pm IST</text>
<text x="1758.00" y="504.00" font-size="12.4" fill="#000000" text-anchor="middle" textLength="13.28" lengthAdjust="spacingAndGlyphs">10</text>
<text x="1813.00" y="504.00" font-size="12.4" fill="#000000" text-anchor="middle" textLength="13.28" lengthAdjust="spacingAndGlyphs">10</text>
<text x="1868.00" y="504.00" font-size="12.4" fill="#000000" text-anchor="middle" textLength="26.56" lengthAdjust="spacingAndGlyphs">2021</text>
<text x="73.00" y="521.00" font-size="13.3" fill="#000000" text-anchor="middle" textLength="20.91" lengthAdjust="spacingAndGlyphs">407</text>
<text x="171.00" y="521.00" font-size="13.3" fill="#000000" text-anchor="middle" textLength="7.10" lengthAdjust="spacingAndGlyphs">P</text>
<text x="273.50" y="521.00" font-size="13.3" fill="#000000" text-anchor="middle" textLength="68.60" lengthAdjust="spacingAndGlyphs">Harsimranjit</text>
<text x="410.50" y="521.00" font-size="13.3" fill="#000000" text-anchor="middle" textLength="69.50" lengthAdjust="spacingAndGlyphs">JAGDALPUR,</text>
<text x="558.50" y="521.00" font-size="13.3" fill="#000000" text-anchor="middle" textLength="87.38" lengthAdjust="spacingAndGlyphs">CHHATTISGARH</text>
<g clip-path="url(#cg)">
<text x="790.00" y="521.00" font-size="13.3" fill="#000000" text-anchor="middle" textLength="327.87" lengthAdjust="spacingAndGlyphs">Round Jewelry Boxes | Button Closure Multiple Utility Case</text>
</g>
<text x="986.00" y="521.00" font-size="13.3" fill="#000000" text-anchor="middle" textLength="6.97" lengthAdjust="spacingAndGlyphs">1</text>
<path d="M1051.46,512.50 H1058.46 M1051.46,514.50 H1058.46 M1051.86,516.50 H1053.66 Q1056.36,516.50 1056.36,514.50 M1053.06,516.50 L1057.86,521.00" fill="none" stroke="#000" stroke-width="1.0" shape-rendering="geometricPrecision"/>
<text x="1058.33" y="521.00" font-size="13.3" fill="#000000" textLength="38.32" lengthAdjust="spacingAndGlyphs">399.00</text>
<text x="1293.00" y="521.00" font-size="13.3" fill="#000000" text-anchor="middle" textLength="103.29" lengthAdjust="spacingAndGlyphs">Delivered to buyer</text>
<text x="1380.00" y="521.00" font-size="13.3" fill="#000000" text-anchor="middle" textLength="41.81" lengthAdjust="spacingAndGlyphs">135191</text>
<text x="1434.00" y="521.00" font-size="13.3" fill="#000000" text-anchor="middle" textLength="31.70" lengthAdjust="spacingAndGlyphs">9 (S9)</text>
<text x="1495.50" y="521.00" font-size="13.3" fill="#000000" text-anchor="middle" textLength="40.13" lengthAdjust="spacingAndGlyphs">Central</text>
<text x="1631.50" y="521.00" font-size="13.3" fill="#000000" text-anchor="middle" textLength="166.21" lengthAdjust="spacingAndGlyphs">Sat, 16 Oct, 2021, 9:51 am IST</text>
<text x="1758.00" y="522.00" font-size="12.4" fill="#000000" text-anchor="middle" textLength="13.28" lengthAdjust="spacingAndGlyphs">16</text>
<text x="1813.00" y="522.00" font-size="12.4" fill="#000000" text-anchor="middle" textLength="13.28" lengthAdjust="spacingAndGlyphs">10</text>
<text x="1868.00" y="522.00" font-size="12.4" fill="#000000" text-anchor="middle" textLength="26.56" lengthAdjust="spacingAndGlyphs">2021</text>
<text x="73.00" y="539.00" font-size="13.3" fill="#000000" text-anchor="middle" textLength="20.91" lengthAdjust="spacingAndGlyphs">408</text>
<text x="171.00" y="539.00" font-size="13.3" fill="#000000" text-anchor="middle" textLength="9.25" lengthAdjust="spacingAndGlyphs">Q</text>
<text x="273.50" y="539.00" font-size="13.3" fill="#000000" text-anchor="middle" textLength="51.85" lengthAdjust="spacingAndGlyphs">shashank</text>
<text x="410.50" y="539.00" font-size="13.3" fill="#000000" text-anchor="middle" textLength="30.35" lengthAdjust="spacingAndGlyphs">Durg,</text>
<text x="558.50" y="539.00" font-size="13.3" fill="#000000" text-anchor="middle" textLength="87.38" lengthAdjust="spacingAndGlyphs">CHHATTISGARH</text>
<g clip-path="url(#cg)">
<text x="790.00" y="539.00" font-size="13.3" fill="#000000" text-anchor="middle" textLength="328.72" lengthAdjust="spacingAndGlyphs">Leather Shoulder Bag: Double Handle Red Handbag | Multi</text>
</g>
<text x="986.00" y="539.00" font-size="13.3" fill="#000000" text-anchor="middle" textLength="6.97" lengthAdjust="spacingAndGlyphs">1</text>
<path d="M1046.26,530.50 H1053.26 M1046.26,532.50 H1053.26 M1046.66,534.50 H1048.46 Q1051.16,534.50 1051.16,532.50 M1047.86,534.50 L1052.66,539.00" fill="none" stroke="#000" stroke-width="1.0" shape-rendering="geometricPrecision"/>
<text x="1053.13" y="539.00" font-size="13.3" fill="#000000" textLength="48.72" lengthAdjust="spacingAndGlyphs">1,299.00</text>
<text x="1293.00" y="539.00" font-size="13.3" fill="#000000" text-anchor="middle" textLength="103.29" lengthAdjust="spacingAndGlyphs">Delivered to buyer</text>
<text x="1380.00" y="539.00" font-size="13.3" fill="#000000" text-anchor="middle" textLength="41.81" lengthAdjust="spacingAndGlyphs">135191</text>
<text x="1434.00" y="539.00" font-size="13.3" fill="#000000" text-anchor="middle" textLength="31.70" lengthAdjust="spacingAndGlyphs">9 (S9)</text>
<text x="1495.50" y="539.00" font-size="13.3" fill="#000000" text-anchor="middle" textLength="40.13" lengthAdjust="spacingAndGlyphs">Central</text>
<text x="1631.50" y="539.00" font-size="13.3" fill="#000000" text-anchor="middle" textLength="175.01" lengthAdjust="spacingAndGlyphs">Mon, 28 Jun, 2021, 5:15 pm IST</text>
<text x="1758.00" y="540.00" font-size="12.4" fill="#000000" text-anchor="middle" textLength="13.28" lengthAdjust="spacingAndGlyphs">28</text>
<text x="1813.00" y="540.00" font-size="12.4" fill="#000000" text-anchor="middle" textLength="6.64" lengthAdjust="spacingAndGlyphs">6</text>
<text x="1868.00" y="540.00" font-size="12.4" fill="#000000" text-anchor="middle" textLength="26.56" lengthAdjust="spacingAndGlyphs">2021</text>
<text x="73.00" y="557.00" font-size="13.3" fill="#000000" text-anchor="middle" textLength="20.91" lengthAdjust="spacingAndGlyphs">171</text>
<text x="171.00" y="557.00" font-size="13.3" fill="#000000" text-anchor="middle" textLength="7.96" lengthAdjust="spacingAndGlyphs">A</text>
<text x="273.50" y="557.00" font-size="13.3" fill="#000000" text-anchor="middle" textLength="43.53" lengthAdjust="spacingAndGlyphs">srisoma</text>
<text x="410.50" y="557.00" font-size="13.3" fill="#000000" text-anchor="middle" textLength="67.35" lengthAdjust="spacingAndGlyphs">NEW DELHI,</text>
<text x="558.50" y="557.00" font-size="13.3" fill="#000000" text-anchor="middle" textLength="32.99" lengthAdjust="spacingAndGlyphs">DELHI</text>
<g clip-path="url(#cg)">
<text x="790.00" y="557.00" font-size="13.3" fill="#000000" text-anchor="middle" textLength="334.06" lengthAdjust="spacingAndGlyphs">ock Printed West Bengal Handicrafts (Shantiniketan Art) | M</text>
</g>
<text x="986.00" y="557.00" font-size="13.3" fill="#000000" text-anchor="middle" textLength="6.97" lengthAdjust="spacingAndGlyphs">1</text>
<path d="M1051.46,548.50 H1058.46 M1051.46,550.50 H1058.46 M1051.86,552.50 H1053.66 Q1056.36,552.50 1056.36,550.50 M1053.06,552.50 L1057.86,557.00" fill="none" stroke="#000" stroke-width="1.0" shape-rendering="geometricPrecision"/>
<text x="1058.33" y="557.00" font-size="13.3" fill="#000000" textLength="38.32" lengthAdjust="spacingAndGlyphs">449.00</text>
<text x="1293.00" y="557.00" font-size="13.3" fill="#000000" text-anchor="middle" textLength="103.29" lengthAdjust="spacingAndGlyphs">Delivered to buyer</text>
<text x="1380.00" y="557.00" font-size="13.3" fill="#000000" text-anchor="middle" textLength="27.88" lengthAdjust="spacingAndGlyphs">1483</text>
<text x="1434.00" y="557.00" font-size="13.3" fill="#000000" text-anchor="middle" textLength="47.88" lengthAdjust="spacingAndGlyphs">32 (UT4)</text>
<text x="1495.50" y="557.00" font-size="13.3" fill="#000000" text-anchor="middle" textLength="51.61" lengthAdjust="spacingAndGlyphs">Northern</text>
<text x="1631.50" y="557.00" font-size="13.3" fill="#000000" text-anchor="middle" textLength="159.88" lengthAdjust="spacingAndGlyphs">Sat, 9 Oct, 2021, 8:46 pm IST</text>
<text x="1758.00" y="558.00" font-size="12.4" fill="#000000" text-anchor="middle" textLength="6.64" lengthAdjust="spacingAndGlyphs">9</text>
<text x="1813.00" y="558.00" font-size="12.4" fill="#000000" text-anchor="middle" textLength="13.28" lengthAdjust="spacingAndGlyphs">10</text>
<text x="1868.00" y="558.00" font-size="12.4" fill="#000000" text-anchor="middle" textLength="26.56" lengthAdjust="spacingAndGlyphs">2021</text>
<text x="73.00" y="575.00" font-size="13.3" fill="#000000" text-anchor="middle" textLength="20.91" lengthAdjust="spacingAndGlyphs">171</text>
<text x="171.00" y="575.00" font-size="13.3" fill="#000000" text-anchor="middle" textLength="7.96" lengthAdjust="spacingAndGlyphs">A</text>
<text x="273.50" y="575.00" font-size="13.3" fill="#000000" text-anchor="middle" textLength="28.41" lengthAdjust="spacingAndGlyphs">Rajat</text>
<text x="410.50" y="575.00" font-size="13.3" fill="#000000" text-anchor="middle" textLength="60.86" lengthAdjust="spacingAndGlyphs">New Delhi,</text>
<text x="558.50" y="575.00" font-size="13.3" fill="#000000" text-anchor="middle" textLength="32.99" lengthAdjust="spacingAndGlyphs">DELHI</text>
<g clip-path="url(#cg)">
<text x="790.00" y="575.00" font-size="13.3" fill="#000000" text-anchor="middle" textLength="328.75" lengthAdjust="spacingAndGlyphs">ntiniketan Leather Ganesh Ji Piggy Coin Bank for Kids/Adult</text>
</g>
<text x="986.00" y="575.00" font-size="13.3" fill="#000000" text-anchor="middle" textLength="6.97" lengthAdjust="spacingAndGlyphs">1</text>
<path d="M1051.46,566.50 H1058.46 M1051.46,568.50 H1058.46 M1051.86,570.50 H1053.66 Q1056.36,570.50 1056.36,568.50 M1053.06,570.50 L1057.86,575.00" fill="none" stroke="#000" stroke-width="1.0" shape-rendering="geometricPrecision"/>
<text x="1058.33" y="575.00" font-size="13.3" fill="#000000" textLength="38.32" lengthAdjust="spacingAndGlyphs">349.00</text>
<text x="1293.00" y="575.00" font-size="13.3" fill="#000000" text-anchor="middle" textLength="103.29" lengthAdjust="spacingAndGlyphs">Delivered to buyer</text>
<text x="1380.00" y="575.00" font-size="13.3" fill="#000000" text-anchor="middle" textLength="27.88" lengthAdjust="spacingAndGlyphs">1483</text>
<text x="1434.00" y="575.00" font-size="13.3" fill="#000000" text-anchor="middle" textLength="47.88" lengthAdjust="spacingAndGlyphs">32 (UT4)</text>
<text x="1495.50" y="575.00" font-size="13.3" fill="#000000" text-anchor="middle" textLength="51.61" lengthAdjust="spacingAndGlyphs">Northern</text>
<text x="1631.50" y="575.00" font-size="13.3" fill="#000000" text-anchor="middle" textLength="161.93" lengthAdjust="spacingAndGlyphs">Sun, 9 Jan, 2022, 9:33 pm IST</text>
<text x="1758.00" y="576.00" font-size="12.4" fill="#000000" text-anchor="middle" textLength="6.64" lengthAdjust="spacingAndGlyphs">9</text>
<text x="1813.00" y="576.00" font-size="12.4" fill="#000000" text-anchor="middle" textLength="6.64" lengthAdjust="spacingAndGlyphs">1</text>
<text x="1868.00" y="576.00" font-size="12.4" fill="#000000" text-anchor="middle" textLength="26.56" lengthAdjust="spacingAndGlyphs">2022</text>
<text x="73.00" y="593.00" font-size="13.3" fill="#000000" text-anchor="middle" textLength="20.91" lengthAdjust="spacingAndGlyphs">171</text>
<text x="171.00" y="593.00" font-size="13.3" fill="#000000" text-anchor="middle" textLength="7.96" lengthAdjust="spacingAndGlyphs">A</text>
<text x="273.50" y="593.00" font-size="13.3" fill="#000000" text-anchor="middle" textLength="34.99" lengthAdjust="spacingAndGlyphs">Vadim</text>
<text x="410.50" y="593.00" font-size="13.3" fill="#000000" text-anchor="middle" textLength="67.35" lengthAdjust="spacingAndGlyphs">NEW DELHI,</text>
<text x="558.50" y="593.00" font-size="13.3" fill="#000000" text-anchor="middle" textLength="32.99" lengthAdjust="spacingAndGlyphs">DELHI</text>
<g clip-path="url(#cg)">
<text x="790.00" y="593.00" font-size="13.3" fill="#000000" text-anchor="middle" textLength="326.88" lengthAdjust="spacingAndGlyphs">eather Piggy Bank for Kids/Adults | Light-Weight Handcraft</text>
</g>
<text x="986.00" y="593.00" font-size="13.3" fill="#000000" text-anchor="middle" textLength="6.97" lengthAdjust="spacingAndGlyphs">1</text>
<path d="M1051.46,584.50 H1058.46 M1051.46,586.50 H1058.46 M1051.86,588.50 H1053.66 Q1056.36,588.50 1056.36,586.50 M1053.06,588.50 L1057.86,593.00" fill="none" stroke="#000" stroke-width="1.0" shape-rendering="geometricPrecision"/>
<text x="1058.33" y="593.00" font-size="13.3" fill="#000000" textLength="38.32" lengthAdjust="spacingAndGlyphs">549.00</text>
<text x="1183.50" y="593.00" font-size="13.3" fill="#000000" text-anchor="middle" textLength="94.68" lengthAdjust="spacingAndGlyphs">Cash On Delivery</text>
<text x="1293.00" y="593.00" font-size="13.3" fill="#000000" text-anchor="middle" textLength="103.29" lengthAdjust="spacingAndGlyphs">Delivered to buyer</text>
<text x="1380.00" y="593.00" font-size="13.3" fill="#000000" text-anchor="middle" textLength="27.88" lengthAdjust="spacingAndGlyphs">1483</text>
<text x="1434.00" y="593.00" font-size="13.3" fill="#000000" text-anchor="middle" textLength="47.88" lengthAdjust="spacingAndGlyphs">32 (UT4)</text>
<text x="1495.50" y="593.00" font-size="13.3" fill="#000000" text-anchor="middle" textLength="51.61" lengthAdjust="spacingAndGlyphs">Northern</text>
<text x="1631.50" y="593.00" font-size="13.3" fill="#000000" text-anchor="middle" textLength="168.05" lengthAdjust="spacingAndGlyphs">Tue, 11 Jan, 2022, 1:46 pm IST</text>
<text x="1758.00" y="594.00" font-size="12.4" fill="#000000" text-anchor="middle" textLength="13.28" lengthAdjust="spacingAndGlyphs">11</text>
<text x="1813.00" y="594.00" font-size="12.4" fill="#000000" text-anchor="middle" textLength="6.64" lengthAdjust="spacingAndGlyphs">1</text>
<text x="1868.00" y="594.00" font-size="12.4" fill="#000000" text-anchor="middle" textLength="26.56" lengthAdjust="spacingAndGlyphs">2022</text>
<text x="73.00" y="611.00" font-size="13.3" fill="#000000" text-anchor="middle" textLength="20.91" lengthAdjust="spacingAndGlyphs">171</text>
<text x="171.00" y="611.00" font-size="13.3" fill="#000000" text-anchor="middle" textLength="7.96" lengthAdjust="spacingAndGlyphs">A</text>
<text x="273.50" y="611.00" font-size="13.3" fill="#000000" text-anchor="middle" textLength="34.99" lengthAdjust="spacingAndGlyphs">Vadim</text>
<text x="410.50" y="611.00" font-size="13.3" fill="#000000" text-anchor="middle" textLength="67.35" lengthAdjust="spacingAndGlyphs">NEW DELHI,</text>
<text x="558.50" y="611.00" font-size="13.3" fill="#000000" text-anchor="middle" textLength="32.99" lengthAdjust="spacingAndGlyphs">DELHI</text>
<g clip-path="url(#cg)">
<text x="790.00" y="611.00" font-size="13.3" fill="#000000" text-anchor="middle" textLength="330.42" lengthAdjust="spacingAndGlyphs">k | Block Printed West Bengal Handicrafts (Shantiniketan Ar</text>
</g>
<text x="986.00" y="611.00" font-size="13.3" fill="#000000" text-anchor="middle" textLength="6.97" lengthAdjust="spacingAndGlyphs">1</text>
<path d="M1051.46,602.50 H1058.46 M1051.46,604.50 H1058.46 M1051.86,606.50 H1053.66 Q1056.36,606.50 1056.36,604.50 M1053.06,606.50 L1057.86,611.00" fill="none" stroke="#000" stroke-width="1.0" shape-rendering="geometricPrecision"/>
<text x="1058.33" y="611.00" font-size="13.3" fill="#000000" textLength="38.32" lengthAdjust="spacingAndGlyphs">449.00</text>
<text x="1183.50" y="611.00" font-size="13.3" fill="#000000" text-anchor="middle" textLength="94.68" lengthAdjust="spacingAndGlyphs">Cash On Delivery</text>
<text x="1293.00" y="611.00" font-size="13.3" fill="#000000" text-anchor="middle" textLength="103.29" lengthAdjust="spacingAndGlyphs">Delivered to buyer</text>
<text x="1380.00" y="611.00" font-size="13.3" fill="#000000" text-anchor="middle" textLength="27.88" lengthAdjust="spacingAndGlyphs">1483</text>
<text x="1434.00" y="611.00" font-size="13.3" fill="#000000" text-anchor="middle" textLength="47.88" lengthAdjust="spacingAndGlyphs">32 (UT4)</text>
<text x="1495.50" y="611.00" font-size="13.3" fill="#000000" text-anchor="middle" textLength="51.61" lengthAdjust="spacingAndGlyphs">Northern</text>
<text x="1631.50" y="611.00" font-size="13.3" fill="#000000" text-anchor="middle" textLength="169.29" lengthAdjust="spacingAndGlyphs">Thu, 27 Jan, 2022, 5:31 pm IST</text>
<text x="1758.00" y="612.00" font-size="12.4" fill="#000000" text-anchor="middle" textLength="13.28" lengthAdjust="spacingAndGlyphs">27</text>
<text x="1813.00" y="612.00" font-size="12.4" fill="#000000" text-anchor="middle" textLength="6.64" lengthAdjust="spacingAndGlyphs">1</text>
<text x="1868.00" y="612.00" font-size="12.4" fill="#000000" text-anchor="middle" textLength="26.56" lengthAdjust="spacingAndGlyphs">2022</text>
<text x="73.00" y="629.00" font-size="13.3" fill="#000000" text-anchor="middle" textLength="20.91" lengthAdjust="spacingAndGlyphs">404</text>
<text x="171.00" y="629.00" font-size="13.3" fill="#000000" text-anchor="middle" textLength="11.76" lengthAdjust="spacingAndGlyphs">M</text>
<text x="273.50" y="629.00" font-size="13.3" fill="#000000" text-anchor="middle" textLength="47.34" lengthAdjust="spacingAndGlyphs">Kangana</text>
<text x="410.50" y="629.00" font-size="13.3" fill="#000000" text-anchor="middle" textLength="67.35" lengthAdjust="spacingAndGlyphs">NEW DELHI,</text>
<text x="558.50" y="629.00" font-size="13.3" fill="#000000" text-anchor="middle" textLength="32.99" lengthAdjust="spacingAndGlyphs">DELHI</text>
<g clip-path="url(#cg)">
<text x="790.00" y="629.00" font-size="13.3" fill="#000000" text-anchor="middle" textLength="334.28" lengthAdjust="spacingAndGlyphs">ound Jewelry Boxes | Button Closure Multiple Utility Case (S</text>
</g>
<text x="986.00" y="629.00" font-size="13.3" fill="#000000" text-anchor="middle" textLength="6.97" lengthAdjust="spacingAndGlyphs">4</text>
<text x="1293.00" y="629.00" font-size="13.3" fill="#000000" text-anchor="middle" textLength="100.01" lengthAdjust="spacingAndGlyphs">Returned to seller</text>
<text x="1380.00" y="629.00" font-size="13.3" fill="#000000" text-anchor="middle" textLength="27.88" lengthAdjust="spacingAndGlyphs">1483</text>
<text x="1434.00" y="629.00" font-size="13.3" fill="#000000" text-anchor="middle" textLength="47.88" lengthAdjust="spacingAndGlyphs">32 (UT4)</text>
<text x="1495.50" y="629.00" font-size="13.3" fill="#000000" text-anchor="middle" textLength="51.61" lengthAdjust="spacingAndGlyphs">Northern</text>
<text x="1631.50" y="629.00" font-size="13.3" fill="#000000" text-anchor="middle" textLength="181.10" lengthAdjust="spacingAndGlyphs">Mon, 20 Sept, 2021, 6:41 pm IST</text>
<text x="1758.00" y="630.00" font-size="12.4" fill="#000000" text-anchor="middle" textLength="13.28" lengthAdjust="spacingAndGlyphs">20</text>
<text x="1813.00" y="630.00" font-size="12.4" fill="#000000" text-anchor="middle" textLength="6.64" lengthAdjust="spacingAndGlyphs">9</text>
<text x="1868.00" y="630.00" font-size="12.4" fill="#000000" text-anchor="middle" textLength="26.56" lengthAdjust="spacingAndGlyphs">2021</text>
<text x="73.00" y="647.00" font-size="13.3" fill="#000000" text-anchor="middle" textLength="20.91" lengthAdjust="spacingAndGlyphs">405</text>
<text x="171.00" y="647.00" font-size="13.3" fill="#000000" text-anchor="middle" textLength="8.88" lengthAdjust="spacingAndGlyphs">N</text>
<text x="273.50" y="647.00" font-size="13.3" fill="#000000" text-anchor="middle" textLength="43.00" lengthAdjust="spacingAndGlyphs">Shobhit</text>
<text x="410.50" y="647.00" font-size="13.3" fill="#000000" text-anchor="middle" textLength="67.35" lengthAdjust="spacingAndGlyphs">NEW DELHI,</text>
<text x="558.50" y="647.00" font-size="13.3" fill="#000000" text-anchor="middle" textLength="32.99" lengthAdjust="spacingAndGlyphs">DELHI</text>
<g clip-path="url(#cg)">
<text x="790.00" y="647.00" font-size="13.3" fill="#000000" text-anchor="middle" textLength="334.13" lengthAdjust="spacingAndGlyphs">ntiniketan Leather Ganesh Ji Piggy Coin Bank for Kids/Adults</text>
</g>
<text x="986.00" y="647.00" font-size="13.3" fill="#000000" text-anchor="middle" textLength="6.97" lengthAdjust="spacingAndGlyphs">1</text>
<path d="M1051.46,638.50 H1058.46 M1051.46,640.50 H1058.46 M1051.86,642.50 H1053.66 Q1056.36,642.50 1056.36,640.50 M1053.06,642.50 L1057.86,647.00" fill="none" stroke="#000" stroke-width="1.0" shape-rendering="geometricPrecision"/>
<text x="1058.33" y="647.00" font-size="13.3" fill="#000000" textLength="38.32" lengthAdjust="spacingAndGlyphs">549.00</text>
<text x="1293.00" y="647.00" font-size="13.3" fill="#000000" text-anchor="middle" textLength="103.29" lengthAdjust="spacingAndGlyphs">Delivered to buyer</text>
<text x="1380.00" y="647.00" font-size="13.3" fill="#000000" text-anchor="middle" textLength="27.88" lengthAdjust="spacingAndGlyphs">1483</text>
<text x="1434.00" y="647.00" font-size="13.3" fill="#000000" text-anchor="middle" textLength="47.88" lengthAdjust="spacingAndGlyphs">32 (UT4)</text>
<text x="1495.50" y="647.00" font-size="13.3" fill="#000000" text-anchor="middle" textLength="51.61" lengthAdjust="spacingAndGlyphs">Northern</text>
<text x="1631.50" y="647.00" font-size="13.3" fill="#000000" text-anchor="middle" textLength="165.85" lengthAdjust="spacingAndGlyphs">Thu, 29 Jul, 2021, 6:04 pm IST</text>
<text x="1758.00" y="648.00" font-size="12.4" fill="#000000" text-anchor="middle" textLength="13.28" lengthAdjust="spacingAndGlyphs">29</text>
<text x="1813.00" y="648.00" font-size="12.4" fill="#000000" text-anchor="middle" textLength="6.64" lengthAdjust="spacingAndGlyphs">7</text>
<text x="1868.00" y="648.00" font-size="12.4" fill="#000000" text-anchor="middle" textLength="26.56" lengthAdjust="spacingAndGlyphs">2021</text>
<text x="73.00" y="665.00" font-size="13.3" fill="#000000" text-anchor="middle" textLength="20.91" lengthAdjust="spacingAndGlyphs">405</text>
<text x="171.00" y="665.00" font-size="13.3" fill="#000000" text-anchor="middle" textLength="8.88" lengthAdjust="spacingAndGlyphs">N</text>
<text x="273.50" y="665.00" font-size="13.3" fill="#000000" text-anchor="middle" textLength="26.00" lengthAdjust="spacingAndGlyphs">Aditi</text>
<text x="410.50" y="665.00" font-size="13.3" fill="#000000" text-anchor="middle" textLength="67.35" lengthAdjust="spacingAndGlyphs">NEW DELHI,</text>
<text x="558.50" y="665.00" font-size="13.3" fill="#000000" text-anchor="middle" textLength="32.99" lengthAdjust="spacingAndGlyphs">DELHI</text>
<g clip-path="url(#cg)">
<text x="790.00" y="665.00" font-size="13.3" fill="#000000" text-anchor="middle" textLength="332.20" lengthAdjust="spacingAndGlyphs">ant Piggy Coin Bank for Kids/Adults | Light-Weight Handcraf</text>
</g>
<text x="986.00" y="665.00" font-size="13.3" fill="#000000" text-anchor="middle" textLength="6.97" lengthAdjust="spacingAndGlyphs">1</text>
<path d="M1051.46,656.50 H1058.46 M1051.46,658.50 H1058.46 M1051.86,660.50 H1053.66 Q1056.36,660.50 1056.36,658.50 M1053.06,660.50 L1057.86,665.00" fill="none" stroke="#000" stroke-width="1.0" shape-rendering="geometricPrecision"/>
<text x="1058.33" y="665.00" font-size="13.3" fill="#000000" textLength="38.32" lengthAdjust="spacingAndGlyphs">449.00</text>
<text x="1293.00" y="665.00" font-size="13.3" fill="#000000" text-anchor="middle" textLength="103.29" lengthAdjust="spacingAndGlyphs">Delivered to buyer</text>
<text x="1380.00" y="665.00" font-size="13.3" fill="#000000" text-anchor="middle" textLength="27.88" lengthAdjust="spacingAndGlyphs">1483</text>
<text x="1434.00" y="665.00" font-size="13.3" fill="#000000" text-anchor="middle" textLength="47.88" lengthAdjust="spacingAndGlyphs">32 (UT4)</text>
<text x="1495.50" y="665.00" font-size="13.3" fill="#000000" text-anchor="middle" textLength="51.61" lengthAdjust="spacingAndGlyphs">Northern</text>
<text x="1631.50" y="665.00" font-size="13.3" fill="#000000" text-anchor="middle" textLength="175.62" lengthAdjust="spacingAndGlyphs">Thu, 20 Jan, 2022, 10:57 am IST</text>
<text x="1758.00" y="666.00" font-size="12.4" fill="#000000" text-anchor="middle" textLength="13.28" lengthAdjust="spacingAndGlyphs">20</text>
<text x="1813.00" y="666.00" font-size="12.4" fill="#000000" text-anchor="middle" textLength="6.64" lengthAdjust="spacingAndGlyphs">1</text>
<text x="1868.00" y="666.00" font-size="12.4" fill="#000000" text-anchor="middle" textLength="26.56" lengthAdjust="spacingAndGlyphs">2022</text>
<text x="73.00" y="683.00" font-size="13.3" fill="#000000" text-anchor="middle" textLength="20.91" lengthAdjust="spacingAndGlyphs">406</text>
<text x="171.00" y="683.00" font-size="13.3" fill="#000000" text-anchor="middle" textLength="9.10" lengthAdjust="spacingAndGlyphs">O</text>
<text x="273.50" y="683.00" font-size="13.3" fill="#000000" text-anchor="middle" textLength="10.98" lengthAdjust="spacingAndGlyphs">m</text>
<text x="410.50" y="683.00" font-size="13.3" fill="#000000" text-anchor="middle" textLength="67.35" lengthAdjust="spacingAndGlyphs">NEW DELHI,</text>
<text x="558.50" y="683.00" font-size="13.3" fill="#000000" text-anchor="middle" textLength="32.99" lengthAdjust="spacingAndGlyphs">DELHI</text>
<g clip-path="url(#cg)">
<text x="790.00" y="683.00" font-size="13.3" fill="#000000" text-anchor="middle" textLength="334.28" lengthAdjust="spacingAndGlyphs">ound Jewelry Boxes | Button Closure Multiple Utility Case (S</text>
</g>
<text x="986.00" y="683.00" font-size="13.3" fill="#000000" text-anchor="middle" textLength="6.97" lengthAdjust="spacingAndGlyphs">1</text>
<path d="M1051.46,674.50 H1058.46 M1051.46,676.50 H1058.46 M1051.86,678.50 H1053.66 Q1056.36,678.50 1056.36,676.50 M1053.06,678.50 L1057.86,683.00" fill="none" stroke="#000" stroke-width="1.0" shape-rendering="geometricPrecision"/>
<text x="1058.33" y="683.00" font-size="13.3" fill="#000000" textLength="38.32" lengthAdjust="spacingAndGlyphs">399.00</text>
<text x="1183.50" y="683.00" font-size="13.3" fill="#000000" text-anchor="middle" textLength="94.68" lengthAdjust="spacingAndGlyphs">Cash On Delivery</text>
<text x="1293.00" y="683.00" font-size="13.3" fill="#000000" text-anchor="middle" textLength="103.29" lengthAdjust="spacingAndGlyphs">Delivered to buyer</text>
<text x="1380.00" y="683.00" font-size="13.3" fill="#000000" text-anchor="middle" textLength="27.88" lengthAdjust="spacingAndGlyphs">1483</text>
<text x="1434.00" y="683.00" font-size="13.3" fill="#000000" text-anchor="middle" textLength="47.88" lengthAdjust="spacingAndGlyphs">32 (UT4)</text>
<text x="1495.50" y="683.00" font-size="13.3" fill="#000000" text-anchor="middle" textLength="51.61" lengthAdjust="spacingAndGlyphs">Northern</text>
<text x="1631.50" y="683.00" font-size="13.3" fill="#000000" text-anchor="middle" textLength="165.42" lengthAdjust="spacingAndGlyphs">Fri, 26 Nov, 2021, 9:12 pm IST</text>
<text x="1758.00" y="684.00" font-size="12.4" fill="#000000" text-anchor="middle" textLength="13.28" lengthAdjust="spacingAndGlyphs">26</text>
<text x="1813.00" y="684.00" font-size="12.4" fill="#000000" text-anchor="middle" textLength="13.28" lengthAdjust="spacingAndGlyphs">11</text>
<text x="1868.00" y="684.00" font-size="12.4" fill="#000000" text-anchor="middle" textLength="26.56" lengthAdjust="spacingAndGlyphs">2021</text>
<text x="73.00" y="701.00" font-size="13.3" fill="#000000" text-anchor="middle" textLength="20.91" lengthAdjust="spacingAndGlyphs">404</text>
<text x="171.00" y="701.00" font-size="13.3" fill="#000000" text-anchor="middle" textLength="11.76" lengthAdjust="spacingAndGlyphs">M</text>
<text x="273.50" y="701.00" font-size="13.3" fill="#000000" text-anchor="middle" textLength="33.76" lengthAdjust="spacingAndGlyphs">chirag</text>
<text x="410.50" y="701.00" font-size="13.3" fill="#000000" text-anchor="middle" textLength="30.37" lengthAdjust="spacingAndGlyphs">RAIA,</text>
<text x="558.50" y="701.00" font-size="13.3" fill="#000000" text-anchor="middle" textLength="25.58" lengthAdjust="spacingAndGlyphs">GOA</text>
<g clip-path="url(#cg)">
<text x="790.00" y="701.00" font-size="13.3" fill="#000000" text-anchor="middle" textLength="328.09" lengthAdjust="spacingAndGlyphs">le Lipstick Cases with Mirror, Handy and Compact Handcraf</text>
</g>
<text x="986.00" y="701.00" font-size="13.3" fill="#000000" text-anchor="middle" textLength="6.97" lengthAdjust="spacingAndGlyphs">1</text>
<path d="M1051.46,692.50 H1058.46 M1051.46,694.50 H1058.46 M1051.86,696.50 H1053.66 Q1056.36,696.50 1056.36,694.50 M1053.06,696.50 L1057.86,701.00" fill="none" stroke="#000" stroke-width="1.0" shape-rendering="geometricPrecision"/>
<text x="1058.33" y="701.00" font-size="13.3" fill="#000000" textLength="38.32" lengthAdjust="spacingAndGlyphs">449.00</text>
<text x="1293.00" y="701.00" font-size="13.3" fill="#000000" text-anchor="middle" textLength="103.29" lengthAdjust="spacingAndGlyphs">Delivered to buyer</text>
<text x="1380.00" y="701.00" font-size="13.3" fill="#000000" text-anchor="middle" textLength="27.88" lengthAdjust="spacingAndGlyphs">3702</text>
<text x="1434.00" y="701.00" font-size="13.3" fill="#000000" text-anchor="middle" textLength="45.64" lengthAdjust="spacingAndGlyphs">31 (S28)</text>
<text x="1495.50" y="701.00" font-size="13.3" fill="#000000" text-anchor="middle" textLength="47.11" lengthAdjust="spacingAndGlyphs">Western</text>
<text x="1631.50" y="701.00" font-size="13.3" fill="#000000" text-anchor="middle" textLength="170.57" lengthAdjust="spacingAndGlyphs">Wed, 4 Aug, 2021, 8:16 pm IST</text>
<text x="1758.00" y="702.00" font-size="12.4" fill="#000000" text-anchor="middle" textLength="6.64" lengthAdjust="spacingAndGlyphs">4</text>
<text x="1813.00" y="702.00" font-size="12.4" fill="#000000" text-anchor="middle" textLength="6.64" lengthAdjust="spacingAndGlyphs">8</text>
<text x="1868.00" y="702.00" font-size="12.4" fill="#000000" text-anchor="middle" textLength="26.56" lengthAdjust="spacingAndGlyphs">2021</text>
<text x="73.00" y="719.00" font-size="13.3" fill="#000000" text-anchor="middle" textLength="20.91" lengthAdjust="spacingAndGlyphs">406</text>
<text x="171.00" y="719.00" font-size="13.3" fill="#000000" text-anchor="middle" textLength="9.10" lengthAdjust="spacingAndGlyphs">O</text>
<text x="273.50" y="719.00" font-size="13.3" fill="#000000" text-anchor="middle" textLength="46.23" lengthAdjust="spacingAndGlyphs">Rebecca</text>
<text x="410.50" y="719.00" font-size="13.3" fill="#000000" text-anchor="middle" textLength="41.47" lengthAdjust="spacingAndGlyphs">Bardez,</text>
<text x="558.50" y="719.00" font-size="13.3" fill="#000000" text-anchor="middle" textLength="25.58" lengthAdjust="spacingAndGlyphs">GOA</text>
<g clip-path="url(#cg)">
<text x="790.00" y="719.00" font-size="13.3" fill="#000000" text-anchor="middle" textLength="332.20" lengthAdjust="spacingAndGlyphs">ant Piggy Coin Bank for Kids/Adults | Light-Weight Handcraf</text>
</g>
<text x="986.00" y="719.00" font-size="13.3" fill="#000000" text-anchor="middle" textLength="6.97" lengthAdjust="spacingAndGlyphs">1</text>
<path d="M1051.46,710.50 H1058.46 M1051.46,712.50 H1058.46 M1051.86,714.50 H1053.66 Q1056.36,714.50 1056.36,712.50 M1053.06,714.50 L1057.86,719.00" fill="none" stroke="#000" stroke-width="1.0" shape-rendering="geometricPrecision"/>
<text x="1058.33" y="719.00" font-size="13.3" fill="#000000" textLength="38.32" lengthAdjust="spacingAndGlyphs">449.00</text>
<text x="1293.00" y="719.00" font-size="13.3" fill="#000000" text-anchor="middle" textLength="103.29" lengthAdjust="spacingAndGlyphs">Delivered to buyer</text>
<text x="1380.00" y="719.00" font-size="13.3" fill="#000000" text-anchor="middle" textLength="27.88" lengthAdjust="spacingAndGlyphs">3702</text>
<text x="1434.00" y="719.00" font-size="13.3" fill="#000000" text-anchor="middle" textLength="45.64" lengthAdjust="spacingAndGlyphs">31 (S28)</text>
<text x="1495.50" y="719.00" font-size="13.3" fill="#000000" text-anchor="middle" textLength="47.11" lengthAdjust="spacingAndGlyphs">Western</text>
<text x="1631.50" y="719.00" font-size="13.3" fill="#000000" text-anchor="middle" textLength="169.88" lengthAdjust="spacingAndGlyphs">Wed, 1 Dec, 2021, 7:12 pm IST</text>
<text x="1758.00" y="720.00" font-size="12.4" fill="#000000" text-anchor="middle" textLength="6.64" lengthAdjust="spacingAndGlyphs">1</text>
<text x="1813.00" y="720.00" font-size="12.4" fill="#000000" text-anchor="middle" textLength="13.28" lengthAdjust="spacingAndGlyphs">12</text>
<text x="1868.00" y="720.00" font-size="12.4" fill="#000000" text-anchor="middle" textLength="26.56" lengthAdjust="spacingAndGlyphs">2021</text>
<text x="73.00" y="737.00" font-size="13.3" fill="#000000" text-anchor="middle" textLength="20.91" lengthAdjust="spacingAndGlyphs">402</text>
<text x="171.00" y="737.00" font-size="13.3" fill="#000000" text-anchor="middle" textLength="7.14" lengthAdjust="spacingAndGlyphs">K</text>
<text x="273.50" y="737.00" font-size="13.3" fill="#000000" text-anchor="middle" textLength="44.68" lengthAdjust="spacingAndGlyphs">Hemant</text>
<text x="410.50" y="737.00" font-size="13.3" fill="#000000" text-anchor="middle" textLength="32.55" lengthAdjust="spacingAndGlyphs">Surat,</text>
<text x="558.50" y="737.00" font-size="13.3" fill="#000000" text-anchor="middle" textLength="50.38" lengthAdjust="spacingAndGlyphs">GUJARAT</text>
<g clip-path="url(#cg)">
<text x="790.00" y="737.00" font-size="13.3" fill="#000000" text-anchor="middle" textLength="328.72" lengthAdjust="spacingAndGlyphs">Leather Shoulder Bag: Double Handle Red Handbag | Multi</text>
</g>
<text x="986.00" y="737.00" font-size="13.3" fill="#000000" text-anchor="middle" textLength="6.97" lengthAdjust="spacingAndGlyphs">1</text>
<path d="M1046.26,728.50 H1053.26 M1046.26,730.50 H1053.26 M1046.66,732.50 H1048.46 Q1051.16,732.50 1051.16,730.50 M1047.86,732.50 L1052.66,737.00" fill="none" stroke="#000" stroke-width="1.0" shape-rendering="geometricPrecision"/>
<text x="1053.13" y="737.00" font-size="13.3" fill="#000000" textLength="48.72" lengthAdjust="spacingAndGlyphs">1,299.00</text>
<text x="1183.50" y="737.00" font-size="13.3" fill="#000000" text-anchor="middle" textLength="94.68" lengthAdjust="spacingAndGlyphs">Cash On Delivery</text>
<text x="1293.00" y="737.00" font-size="13.3" fill="#000000" text-anchor="middle" textLength="103.29" lengthAdjust="spacingAndGlyphs">Delivered to buyer</text>
<text x="1380.00" y="737.00" font-size="13.3" fill="#000000" text-anchor="middle" textLength="41.81" lengthAdjust="spacingAndGlyphs">196024</text>
<text x="1434.00" y="737.00" font-size="13.3" fill="#000000" text-anchor="middle" textLength="31.70" lengthAdjust="spacingAndGlyphs">5 (S5)</text>
<text x="1495.50" y="737.00" font-size="13.3" fill="#000000" text-anchor="middle" textLength="47.11" lengthAdjust="spacingAndGlyphs">Western</text>
<text x="1631.50" y="737.00" font-size="13.3" fill="#000000" text-anchor="middle" textLength="172.98" lengthAdjust="spacingAndGlyphs">Fri, 20 Aug, 2021, 11:07 pm IST</text>
<text x="1758.00" y="738.00" font-size="12.4" fill="#000000" text-anchor="middle" textLength="13.28" lengthAdjust="spacingAndGlyphs">20</text>
<text x="1813.00" y="738.00" font-size="12.4" fill="#000000" text-anchor="middle" textLength="6.64" lengthAdjust="spacingAndGlyphs">8</text>
<text x="1868.00" y="738.00" font-size="12.4" fill="#000000" text-anchor="middle" textLength="26.56" lengthAdjust="spacingAndGlyphs">2021</text>
<text x="73.00" y="755.00" font-size="13.3" fill="#000000" text-anchor="middle" textLength="20.91" lengthAdjust="spacingAndGlyphs">403</text>
<text x="171.00" y="755.00" font-size="13.3" fill="#000000" text-anchor="middle" textLength="5.78" lengthAdjust="spacingAndGlyphs">L</text>
<text x="273.50" y="755.00" font-size="13.3" fill="#000000" text-anchor="middle" textLength="33.99" lengthAdjust="spacingAndGlyphs">ONGC</text>
<text x="410.50" y="755.00" font-size="13.3" fill="#000000" text-anchor="middle" textLength="67.84" lengthAdjust="spacingAndGlyphs">VADODARA,</text>
<text x="558.50" y="755.00" font-size="13.3" fill="#000000" text-anchor="middle" textLength="50.38" lengthAdjust="spacingAndGlyphs">GUJARAT</text>
<g clip-path="url(#cg)">
<text x="790.00" y="755.00" font-size="13.3" fill="#000000" text-anchor="middle" textLength="331.24" lengthAdjust="spacingAndGlyphs">iant Piggy Coin Bank for Kids/Adults | Light-Weight Handcra</text>
</g>
<text x="986.00" y="755.00" font-size="13.3" fill="#000000" text-anchor="middle" textLength="6.97" lengthAdjust="spacingAndGlyphs">1</text>
<path d="M1051.46,746.50 H1058.46 M1051.46,748.50 H1058.46 M1051.86,750.50 H1053.66 Q1056.36,750.50 1056.36,748.50 M1053.06,750.50 L1057.86,755.00" fill="none" stroke="#000" stroke-width="1.0" shape-rendering="geometricPrecision"/>
<text x="1058.33" y="755.00" font-size="13.3" fill="#000000" textLength="38.32" lengthAdjust="spacingAndGlyphs">349.00</text>
<text x="1293.00" y="755.00" font-size="13.3" fill="#000000" text-anchor="middle" textLength="103.29" lengthAdjust="spacingAndGlyphs">Delivered to buyer</text>
<text x="1380.00" y="755.00" font-size="13.3" fill="#000000" text-anchor="middle" textLength="41.81" lengthAdjust="spacingAndGlyphs">196024</text>
<text x="1434.00" y="755.00" font-size="13.3" fill="#000000" text-anchor="middle" textLength="31.70" lengthAdjust="spacingAndGlyphs">5 (S5)</text>
<text x="1495.50" y="755.00" font-size="13.3" fill="#000000" text-anchor="middle" textLength="47.11" lengthAdjust="spacingAndGlyphs">Western</text>
<text x="1631.50" y="755.00" font-size="13.3" fill="#000000" text-anchor="middle" textLength="171.66" lengthAdjust="spacingAndGlyphs">Thu, 11 Nov, 2021, 6:16 am IST</text>
<text x="1758.00" y="756.00" font-size="12.4" fill="#000000" text-anchor="middle" textLength="13.28" lengthAdjust="spacingAndGlyphs">11</text>
<text x="1813.00" y="756.00" font-size="12.4" fill="#000000" text-anchor="middle" textLength="13.28" lengthAdjust="spacingAndGlyphs">11</text>
<text x="1868.00" y="756.00" font-size="12.4" fill="#000000" text-anchor="middle" textLength="26.56" lengthAdjust="spacingAndGlyphs">2021</text>
<text x="73.00" y="773.00" font-size="13.3" fill="#000000" text-anchor="middle" textLength="20.91" lengthAdjust="spacingAndGlyphs">403</text>
<text x="171.00" y="773.00" font-size="13.3" fill="#000000" text-anchor="middle" textLength="5.78" lengthAdjust="spacingAndGlyphs">L</text>
<text x="273.50" y="773.00" font-size="13.3" fill="#000000" text-anchor="middle" textLength="28.98" lengthAdjust="spacingAndGlyphs">parul</text>
<text x="410.50" y="773.00" font-size="13.3" fill="#000000" text-anchor="middle" textLength="32.55" lengthAdjust="spacingAndGlyphs">Surat,</text>
<text x="558.50" y="773.00" font-size="13.3" fill="#000000" text-anchor="middle" textLength="50.38" lengthAdjust="spacingAndGlyphs">GUJARAT</text>
<g clip-path="url(#cg)">
<text x="790.00" y="773.00" font-size="13.3" fill="#000000" text-anchor="middle" textLength="342.24" lengthAdjust="spacingAndGlyphs">Handbag: 100% Pure Leather Shantiniketan Shoulder Bag | M</text>
</g>
<text x="986.00" y="773.00" font-size="13.3" fill="#000000" text-anchor="middle" textLength="6.97" lengthAdjust="spacingAndGlyphs">1</text>
<path d="M1046.26,764.50 H1053.26 M1046.26,766.50 H1053.26 M1046.66,768.50 H1048.46 Q1051.16,768.50 1051.16,766.50 M1047.86,768.50 L1052.66,773.00" fill="none" stroke="#000" stroke-width="1.0" shape-rendering="geometricPrecision"/>
<text x="1053.13" y="773.00" font-size="13.3" fill="#000000" textLength="48.72" lengthAdjust="spacingAndGlyphs">1,099.00</text>
<text x="1183.50" y="773.00" font-size="13.3" fill="#000000" text-anchor="middle" textLength="94.68" lengthAdjust="spacingAndGlyphs">Cash On Delivery</text>
<text x="1293.00" y="773.00" font-size="13.3" fill="#000000" text-anchor="middle" textLength="103.29" lengthAdjust="spacingAndGlyphs">Delivered to buyer</text>
<text x="1380.00" y="773.00" font-size="13.3" fill="#000000" text-anchor="middle" textLength="41.81" lengthAdjust="spacingAndGlyphs">196024</text>
<text x="1434.00" y="773.00" font-size="13.3" fill="#000000" text-anchor="middle" textLength="31.70" lengthAdjust="spacingAndGlyphs">5 (S5)</text>
<text x="1495.50" y="773.00" font-size="13.3" fill="#000000" text-anchor="middle" textLength="47.11" lengthAdjust="spacingAndGlyphs">Western</text>
<text x="1631.50" y="773.00" font-size="13.3" fill="#000000" text-anchor="middle" textLength="175.50" lengthAdjust="spacingAndGlyphs">Sat, 13 Nov, 2021, 12:48 pm IST</text>
<text x="1758.00" y="774.00" font-size="12.4" fill="#000000" text-anchor="middle" textLength="13.28" lengthAdjust="spacingAndGlyphs">13</text>
<text x="1813.00" y="774.00" font-size="12.4" fill="#000000" text-anchor="middle" textLength="13.28" lengthAdjust="spacingAndGlyphs">11</text>
<text x="1868.00" y="774.00" font-size="12.4" fill="#000000" text-anchor="middle" textLength="26.56" lengthAdjust="spacingAndGlyphs">2021</text>
<text x="73.00" y="791.00" font-size="13.3" fill="#000000" text-anchor="middle" textLength="20.91" lengthAdjust="spacingAndGlyphs">405</text>
<text x="171.00" y="791.00" font-size="13.3" fill="#000000" text-anchor="middle" textLength="8.88" lengthAdjust="spacingAndGlyphs">N</text>
<text x="273.50" y="791.00" font-size="13.3" fill="#000000" text-anchor="middle" textLength="41.51" lengthAdjust="spacingAndGlyphs">Rathish</text>
<text x="410.50" y="791.00" font-size="13.3" fill="#000000" text-anchor="middle" textLength="78.03" lengthAdjust="spacingAndGlyphs">AHMEDABAD,</text>
<text x="558.50" y="791.00" font-size="13.3" fill="#000000" text-anchor="middle" textLength="50.38" lengthAdjust="spacingAndGlyphs">GUJARAT</text>
<g clip-path="url(#cg)">
<text x="790.00" y="791.00" font-size="13.3" fill="#000000" text-anchor="middle" textLength="329.39" lengthAdjust="spacingAndGlyphs">ar Jewelry Box with Mirror | Button Closure Multiple Utility</text>
</g>
<text x="986.00" y="791.00" font-size="13.3" fill="#000000" text-anchor="middle" textLength="6.97" lengthAdjust="spacingAndGlyphs">1</text>
<path d="M1051.46,782.50 H1058.46 M1051.46,784.50 H1058.46 M1051.86,786.50 H1053.66 Q1056.36,786.50 1056.36,784.50 M1053.06,786.50 L1057.86,791.00" fill="none" stroke="#000" stroke-width="1.0" shape-rendering="geometricPrecision"/>
<text x="1058.33" y="791.00" font-size="13.3" fill="#000000" textLength="38.32" lengthAdjust="spacingAndGlyphs">250.00</text>
<text x="1293.00" y="791.00" font-size="13.3" fill="#000000" text-anchor="middle" textLength="103.29" lengthAdjust="spacingAndGlyphs">Delivered to buyer</text>
<text x="1380.00" y="791.00" font-size="13.3" fill="#000000" text-anchor="middle" textLength="41.81" lengthAdjust="spacingAndGlyphs">196024</text>
<text x="1434.00" y="791.00" font-size="13.3" fill="#000000" text-anchor="middle" textLength="31.70" lengthAdjust="spacingAndGlyphs">5 (S5)</text>
<text x="1495.50" y="791.00" font-size="13.3" fill="#000000" text-anchor="middle" textLength="47.11" lengthAdjust="spacingAndGlyphs">Western</text>
<text x="1631.50" y="791.00" font-size="13.3" fill="#000000" text-anchor="middle" textLength="156.76" lengthAdjust="spacingAndGlyphs">Fri, 1 Oct, 2021, 2:18 pm IST</text>
<text x="1758.00" y="792.00" font-size="12.4" fill="#000000" text-anchor="middle" textLength="6.64" lengthAdjust="spacingAndGlyphs">1</text>
<text x="1813.00" y="792.00" font-size="12.4" fill="#000000" text-anchor="middle" textLength="13.28" lengthAdjust="spacingAndGlyphs">10</text>
<text x="1868.00" y="792.00" font-size="12.4" fill="#000000" text-anchor="middle" textLength="26.56" lengthAdjust="spacingAndGlyphs">2021</text>
<text x="73.00" y="809.00" font-size="13.3" fill="#000000" text-anchor="middle" textLength="20.91" lengthAdjust="spacingAndGlyphs">405</text>
<text x="171.00" y="809.00" font-size="13.3" fill="#000000" text-anchor="middle" textLength="8.88" lengthAdjust="spacingAndGlyphs">N</text>
<text x="273.50" y="809.00" font-size="13.3" fill="#000000" text-anchor="middle" textLength="47.28" lengthAdjust="spacingAndGlyphs">Gaurang</text>
<text x="410.50" y="809.00" font-size="13.3" fill="#000000" text-anchor="middle" textLength="78.03" lengthAdjust="spacingAndGlyphs">AHMEDABAD,</text>
<text x="558.50" y="809.00" font-size="13.3" fill="#000000" text-anchor="middle" textLength="50.38" lengthAdjust="spacingAndGlyphs">GUJARAT</text>
<g clip-path="url(#cg)">
<text x="790.00" y="809.00" font-size="13.3" fill="#000000" text-anchor="middle" textLength="330.42" lengthAdjust="spacingAndGlyphs">k | Block Printed West Bengal Handicrafts (Shantiniketan Ar</text>
</g>
<text x="986.00" y="809.00" font-size="13.3" fill="#000000" text-anchor="middle" textLength="6.97" lengthAdjust="spacingAndGlyphs">1</text>
<path d="M1051.46,800.50 H1058.46 M1051.46,802.50 H1058.46 M1051.86,804.50 H1053.66 Q1056.36,804.50 1056.36,802.50 M1053.06,804.50 L1057.86,809.00" fill="none" stroke="#000" stroke-width="1.0" shape-rendering="geometricPrecision"/>
<text x="1058.33" y="809.00" font-size="13.3" fill="#000000" textLength="38.32" lengthAdjust="spacingAndGlyphs">449.00</text>
<text x="1293.00" y="809.00" font-size="13.3" fill="#000000" text-anchor="middle" textLength="103.29" lengthAdjust="spacingAndGlyphs">Delivered to buyer</text>
<text x="1380.00" y="809.00" font-size="13.3" fill="#000000" text-anchor="middle" textLength="41.81" lengthAdjust="spacingAndGlyphs">196024</text>
<text x="1434.00" y="809.00" font-size="13.3" fill="#000000" text-anchor="middle" textLength="31.70" lengthAdjust="spacingAndGlyphs">5 (S5)</text>
<text x="1495.50" y="809.00" font-size="13.3" fill="#000000" text-anchor="middle" textLength="47.11" lengthAdjust="spacingAndGlyphs">Western</text>
<text x="1631.50" y="809.00" font-size="13.3" fill="#000000" text-anchor="middle" textLength="176.85" lengthAdjust="spacingAndGlyphs">Wed, 8 Dec, 2021, 11:54 pm IST</text>
<text x="1758.00" y="810.00" font-size="12.4" fill="#000000" text-anchor="middle" textLength="6.64" lengthAdjust="spacingAndGlyphs">8</text>
<text x="1813.00" y="810.00" font-size="12.4" fill="#000000" text-anchor="middle" textLength="13.28" lengthAdjust="spacingAndGlyphs">12</text>
<text x="1868.00" y="810.00" font-size="12.4" fill="#000000" text-anchor="middle" textLength="26.56" lengthAdjust="spacingAndGlyphs">2021</text>
<text x="73.00" y="827.00" font-size="13.3" fill="#000000" text-anchor="middle" textLength="20.91" lengthAdjust="spacingAndGlyphs">407</text>
<text x="171.00" y="827.00" font-size="13.3" fill="#000000" text-anchor="middle" textLength="7.10" lengthAdjust="spacingAndGlyphs">P</text>
<text x="273.50" y="827.00" font-size="13.3" fill="#000000" text-anchor="middle" textLength="27.00" lengthAdjust="spacingAndGlyphs">Aarti</text>
<text x="410.50" y="827.00" font-size="13.3" fill="#000000" text-anchor="middle" textLength="60.00" lengthAdjust="spacingAndGlyphs">BILIMORA,</text>
<text x="558.50" y="827.00" font-size="13.3" fill="#000000" text-anchor="middle" textLength="50.38" lengthAdjust="spacingAndGlyphs">GUJARAT</text>
<g clip-path="url(#cg)">
<text x="790.00" y="827.00" font-size="13.3" fill="#000000" text-anchor="middle" textLength="325.99" lengthAdjust="spacingAndGlyphs">Traditional Block Print Bi-color Women&#x27;s Wallets with Mult</text>
</g>
<text x="986.00" y="827.00" font-size="13.3" fill="#000000" text-anchor="middle" textLength="6.97" lengthAdjust="spacingAndGlyphs">1</text>
<path d="M1051.46,818.50 H1058.46 M1051.46,820.50 H1058.46 M1051.86,822.50 H1053.66 Q1056.36,822.50 1056.36,820.50 M1053.06,822.50 L1057.86,827.00" fill="none" stroke="#000" stroke-width="1.0" shape-rendering="geometricPrecision"/>
<text x="1058.33" y="827.00" font-size="13.3" fill="#000000" textLength="38.32" lengthAdjust="spacingAndGlyphs">399.00</text>
<text x="1183.50" y="827.00" font-size="13.3" fill="#000000" text-anchor="middle" textLength="94.68" lengthAdjust="spacingAndGlyphs">Cash On Delivery</text>
<text x="1293.00" y="827.00" font-size="13.3" fill="#000000" text-anchor="middle" textLength="103.29" lengthAdjust="spacingAndGlyphs">Delivered to buyer</text>
<text x="1380.00" y="827.00" font-size="13.3" fill="#000000" text-anchor="middle" textLength="41.81" lengthAdjust="spacingAndGlyphs">196024</text>
<text x="1434.00" y="827.00" font-size="13.3" fill="#000000" text-anchor="middle" textLength="31.70" lengthAdjust="spacingAndGlyphs">5 (S5)</text>
<text x="1495.50" y="827.00" font-size="13.3" fill="#000000" text-anchor="middle" textLength="47.11" lengthAdjust="spacingAndGlyphs">Western</text>
<text x="1631.50" y="827.00" font-size="13.3" fill="#000000" text-anchor="middle" textLength="168.90" lengthAdjust="spacingAndGlyphs">Sun, 30 Jan, 2022, 7:13 pm IST</text>
<text x="1758.00" y="828.00" font-size="12.4" fill="#000000" text-anchor="middle" textLength="13.28" lengthAdjust="spacingAndGlyphs">30</text>
<text x="1813.00" y="828.00" font-size="12.4" fill="#000000" text-anchor="middle" textLength="6.64" lengthAdjust="spacingAndGlyphs">1</text>
<text x="1868.00" y="828.00" font-size="12.4" fill="#000000" text-anchor="middle" textLength="26.56" lengthAdjust="spacingAndGlyphs">2022</text>
<text x="73.00" y="845.00" font-size="13.3" fill="#000000" text-anchor="middle" textLength="20.91" lengthAdjust="spacingAndGlyphs">171</text>
<text x="171.00" y="845.00" font-size="13.3" fill="#000000" text-anchor="middle" textLength="7.96" lengthAdjust="spacingAndGlyphs">A</text>
<text x="273.50" y="845.00" font-size="13.3" fill="#000000" text-anchor="middle" textLength="42.55" lengthAdjust="spacingAndGlyphs">Geetika</text>
<text x="410.50" y="845.00" font-size="13.3" fill="#000000" text-anchor="middle" textLength="73.07" lengthAdjust="spacingAndGlyphs">GURUGRAM,</text>
<text x="558.50" y="845.00" font-size="13.3" fill="#000000" text-anchor="middle" textLength="54.25" lengthAdjust="spacingAndGlyphs">HARYANA</text>
<g clip-path="url(#cg)">
<text x="790.00" y="845.00" font-size="13.3" fill="#000000" text-anchor="middle" textLength="328.09" lengthAdjust="spacingAndGlyphs">le Lipstick Cases with Mirror, Handy and Compact Handcraf</text>
</g>
<text x="986.00" y="845.00" font-size="13.3" fill="#000000" text-anchor="middle" textLength="6.97" lengthAdjust="spacingAndGlyphs">1</text>
<text x="1293.00" y="845.00" font-size="13.3" fill="#000000" text-anchor="middle" textLength="100.01" lengthAdjust="spacingAndGlyphs">Returned to seller</text>
<text x="1380.00" y="845.00" font-size="13.3" fill="#000000" text-anchor="middle" textLength="34.85" lengthAdjust="spacingAndGlyphs">44212</text>
<text x="1434.00" y="845.00" font-size="13.3" fill="#000000" text-anchor="middle" textLength="45.64" lengthAdjust="spacingAndGlyphs">21 (S20)</text>
<text x="1495.50" y="845.00" font-size="13.3" fill="#000000" text-anchor="middle" textLength="51.61" lengthAdjust="spacingAndGlyphs">Northern</text>
<text x="1631.50" y="845.00" font-size="13.3" fill="#000000" text-anchor="middle" textLength="171.61" lengthAdjust="spacingAndGlyphs">Sat, 4 Sept, 2021, 11:53 am IST</text>
<text x="1758.00" y="846.00" font-size="12.4" fill="#000000" text-anchor="middle" textLength="6.64" lengthAdjust="spacingAndGlyphs">4</text>
<text x="1813.00" y="846.00" font-size="12.4" fill="#000000" text-anchor="middle" textLength="6.64" lengthAdjust="spacingAndGlyphs">9</text>
<text x="1868.00" y="846.00" font-size="12.4" fill="#000000" text-anchor="middle" textLength="26.56" lengthAdjust="spacingAndGlyphs">2021</text>
<text x="73.00" y="863.00" font-size="13.3" fill="#000000" text-anchor="middle" textLength="20.91" lengthAdjust="spacingAndGlyphs">171</text>
<text x="171.00" y="863.00" font-size="13.3" fill="#000000" text-anchor="middle" textLength="7.96" lengthAdjust="spacingAndGlyphs">A</text>
<text x="273.50" y="863.00" font-size="13.3" fill="#000000" text-anchor="middle" textLength="42.55" lengthAdjust="spacingAndGlyphs">Geetika</text>
<text x="410.50" y="863.00" font-size="13.3" fill="#000000" text-anchor="middle" textLength="73.07" lengthAdjust="spacingAndGlyphs">GURUGRAM,</text>
<text x="558.50" y="863.00" font-size="13.3" fill="#000000" text-anchor="middle" textLength="54.25" lengthAdjust="spacingAndGlyphs">HARYANA</text>
<g clip-path="url(#cg)">
<text x="790.00" y="863.00" font-size="13.3" fill="#000000" text-anchor="middle" textLength="328.09" lengthAdjust="spacingAndGlyphs">le Lipstick Cases with Mirror, Handy and Compact Handcraf</text>
</g>
<text x="986.00" y="863.00" font-size="13.3" fill="#000000" text-anchor="middle" textLength="6.97" lengthAdjust="spacingAndGlyphs">3</text>
<path d="M1046.26,854.50 H1053.26 M1046.26,856.50 H1053.26 M1046.66,858.50 H1048.46 Q1051.16,858.50 1051.16,856.50 M1047.86,858.50 L1052.66,863.00" fill="none" stroke="#000" stroke-width="1.0" shape-rendering="geometricPrecision"/>
<text x="1053.13" y="863.00" font-size="13.3" fill="#000000" textLength="48.72" lengthAdjust="spacingAndGlyphs">1,347.00</text>
<text x="1293.00" y="863.00" font-size="13.3" fill="#000000" text-anchor="middle" textLength="103.29" lengthAdjust="spacingAndGlyphs">Delivered to buyer</text>
<text x="1380.00" y="863.00" font-size="13.3" fill="#000000" text-anchor="middle" textLength="34.85" lengthAdjust="spacingAndGlyphs">44212</text>
<text x="1434.00" y="863.00" font-size="13.3" fill="#000000" text-anchor="middle" textLength="45.64" lengthAdjust="spacingAndGlyphs">21 (S20)</text>
<text x="1495.50" y="863.00" font-size="13.3" fill="#000000" text-anchor="middle" textLength="51.61" lengthAdjust="spacingAndGlyphs">Northern</text>
<text x="1631.50" y="863.00" font-size="13.3" fill="#000000" text-anchor="middle" textLength="171.06" lengthAdjust="spacingAndGlyphs">Tue, 9 Nov, 2021, 11:23 pm IST</text>
<text x="1758.00" y="864.00" font-size="12.4" fill="#000000" text-anchor="middle" textLength="6.64" lengthAdjust="spacingAndGlyphs">9</text>
<text x="1813.00" y="864.00" font-size="12.4" fill="#000000" text-anchor="middle" textLength="13.28" lengthAdjust="spacingAndGlyphs">11</text>
<text x="1868.00" y="864.00" font-size="12.4" fill="#000000" text-anchor="middle" textLength="26.56" lengthAdjust="spacingAndGlyphs">2021</text>
<text x="73.00" y="881.00" font-size="13.3" fill="#000000" text-anchor="middle" textLength="20.91" lengthAdjust="spacingAndGlyphs">171</text>
<text x="171.00" y="881.00" font-size="13.3" fill="#000000" text-anchor="middle" textLength="7.96" lengthAdjust="spacingAndGlyphs">A</text>
<text x="273.50" y="881.00" font-size="13.3" fill="#000000" text-anchor="middle" textLength="42.55" lengthAdjust="spacingAndGlyphs">Geetika</text>
<text x="410.50" y="881.00" font-size="13.3" fill="#000000" text-anchor="middle" textLength="73.07" lengthAdjust="spacingAndGlyphs">GURUGRAM,</text>
<text x="558.50" y="881.00" font-size="13.3" fill="#000000" text-anchor="middle" textLength="54.25" lengthAdjust="spacingAndGlyphs">HARYANA</text>
<g clip-path="url(#cg)">
<text x="790.00" y="881.00" font-size="13.3" fill="#000000" text-anchor="middle" textLength="328.09" lengthAdjust="spacingAndGlyphs">le Lipstick Cases with Mirror, Handy and Compact Handcraf</text>
</g>
<text x="986.00" y="881.00" font-size="13.3" fill="#000000" text-anchor="middle" textLength="6.97" lengthAdjust="spacingAndGlyphs">1</text>
<path d="M1051.46,872.50 H1058.46 M1051.46,874.50 H1058.46 M1051.86,876.50 H1053.66 Q1056.36,876.50 1056.36,874.50 M1053.06,876.50 L1057.86,881.00" fill="none" stroke="#000" stroke-width="1.0" shape-rendering="geometricPrecision"/>
<text x="1058.33" y="881.00" font-size="13.3" fill="#000000" textLength="38.32" lengthAdjust="spacingAndGlyphs">449.00</text>
<text x="1293.00" y="881.00" font-size="13.3" fill="#000000" text-anchor="middle" textLength="103.29" lengthAdjust="spacingAndGlyphs">Delivered to buyer</text>
<text x="1380.00" y="881.00" font-size="13.3" fill="#000000" text-anchor="middle" textLength="34.85" lengthAdjust="spacingAndGlyphs">44212</text>
<text x="1434.00" y="881.00" font-size="13.3" fill="#000000" text-anchor="middle" textLength="45.64" lengthAdjust="spacingAndGlyphs">21 (S20)</text>
<text x="1495.50" y="881.00" font-size="13.3" fill="#000000" text-anchor="middle" textLength="51.61" lengthAdjust="spacingAndGlyphs">Northern</text>
<text x="1631.50" y="881.00" font-size="13.3" fill="#000000" text-anchor="middle" textLength="169.88" lengthAdjust="spacingAndGlyphs">Wed, 8 Dec, 2021, 9:22 pm IST</text>
<text x="1758.00" y="882.00" font-size="12.4" fill="#000000" text-anchor="middle" textLength="6.64" lengthAdjust="spacingAndGlyphs">8</text>
<text x="1813.00" y="882.00" font-size="12.4" fill="#000000" text-anchor="middle" textLength="13.28" lengthAdjust="spacingAndGlyphs">12</text>
<text x="1868.00" y="882.00" font-size="12.4" fill="#000000" text-anchor="middle" textLength="26.56" lengthAdjust="spacingAndGlyphs">2021</text>
<text x="73.00" y="899.00" font-size="13.3" fill="#000000" text-anchor="middle" textLength="20.91" lengthAdjust="spacingAndGlyphs">403</text>
<text x="171.00" y="899.00" font-size="13.3" fill="#000000" text-anchor="middle" textLength="5.78" lengthAdjust="spacingAndGlyphs">L</text>
<text x="273.50" y="899.00" font-size="13.3" fill="#000000" text-anchor="middle" textLength="42.74" lengthAdjust="spacingAndGlyphs">Sumeet</text>
<text x="410.50" y="899.00" font-size="13.3" fill="#000000" text-anchor="middle" textLength="67.47" lengthAdjust="spacingAndGlyphs">FARIDABAD,</text>
<text x="558.50" y="899.00" font-size="13.3" fill="#000000" text-anchor="middle" textLength="54.25" lengthAdjust="spacingAndGlyphs">HARYANA</text>
<g clip-path="url(#cg)">
<text x="790.00" y="899.00" font-size="13.3" fill="#000000" text-anchor="middle" textLength="330.42" lengthAdjust="spacingAndGlyphs">k | Block Printed West Bengal Handicrafts (Shantiniketan Ar</text>
</g>
<text x="986.00" y="899.00" font-size="13.3" fill="#000000" text-anchor="middle" textLength="6.97" lengthAdjust="spacingAndGlyphs">1</text>
<path d="M1051.46,890.50 H1058.46 M1051.46,892.50 H1058.46 M1051.86,894.50 H1053.66 Q1056.36,894.50 1056.36,892.50 M1053.06,894.50 L1057.86,899.00" fill="none" stroke="#000" stroke-width="1.0" shape-rendering="geometricPrecision"/>
<text x="1058.33" y="899.00" font-size="13.3" fill="#000000" textLength="38.32" lengthAdjust="spacingAndGlyphs">449.00</text>
<text x="1293.00" y="899.00" font-size="13.3" fill="#000000" text-anchor="middle" textLength="103.29" lengthAdjust="spacingAndGlyphs">Delivered to buyer</text>
<text x="1380.00" y="899.00" font-size="13.3" fill="#000000" text-anchor="middle" textLength="34.85" lengthAdjust="spacingAndGlyphs">44212</text>
<text x="1434.00" y="899.00" font-size="13.3" fill="#000000" text-anchor="middle" textLength="45.64" lengthAdjust="spacingAndGlyphs">21 (S20)</text>
<text x="1495.50" y="899.00" font-size="13.3" fill="#000000" text-anchor="middle" textLength="51.61" lengthAdjust="spacingAndGlyphs">Northern</text>
<text x="1631.50" y="899.00" font-size="13.3" fill="#000000" text-anchor="middle" textLength="168.09" lengthAdjust="spacingAndGlyphs">Mon, 4 Oct, 2021, 1:10 am IST</text>
<text x="1758.00" y="900.00" font-size="12.4" fill="#000000" text-anchor="middle" textLength="6.64" lengthAdjust="spacingAndGlyphs">4</text>
<text x="1813.00" y="900.00" font-size="12.4" fill="#000000" text-anchor="middle" textLength="13.28" lengthAdjust="spacingAndGlyphs">10</text>
<text x="1868.00" y="900.00" font-size="12.4" fill="#000000" text-anchor="middle" textLength="26.56" lengthAdjust="spacingAndGlyphs">2021</text>
<text x="73.00" y="917.00" font-size="13.3" fill="#000000" text-anchor="middle" textLength="20.91" lengthAdjust="spacingAndGlyphs">404</text>
<text x="171.00" y="917.00" font-size="13.3" fill="#000000" text-anchor="middle" textLength="11.76" lengthAdjust="spacingAndGlyphs">M</text>
<text x="273.50" y="917.00" font-size="13.3" fill="#000000" text-anchor="middle" textLength="29.10" lengthAdjust="spacingAndGlyphs">swati</text>
<text x="410.50" y="917.00" font-size="13.3" fill="#000000" text-anchor="middle" textLength="73.07" lengthAdjust="spacingAndGlyphs">GURUGRAM,</text>
<text x="558.50" y="917.00" font-size="13.3" fill="#000000" text-anchor="middle" textLength="54.25" lengthAdjust="spacingAndGlyphs">HARYANA</text>
<g clip-path="url(#cg)">
<text x="790.00" y="917.00" font-size="13.3" fill="#000000" text-anchor="middle" textLength="334.28" lengthAdjust="spacingAndGlyphs">ound Jewelry Boxes | Button Closure Multiple Utility Case (S</text>
</g>
<text x="986.00" y="917.00" font-size="13.3" fill="#000000" text-anchor="middle" textLength="6.97" lengthAdjust="spacingAndGlyphs">1</text>
<path d="M1051.46,908.50 H1058.46 M1051.46,910.50 H1058.46 M1051.86,912.50 H1053.66 Q1056.36,912.50 1056.36,910.50 M1053.06,912.50 L1057.86,917.00" fill="none" stroke="#000" stroke-width="1.0" shape-rendering="geometricPrecision"/>
<text x="1058.33" y="917.00" font-size="13.3" fill="#000000" textLength="38.32" lengthAdjust="spacingAndGlyphs">399.00</text>
<text x="1293.00" y="917.00" font-size="13.3" fill="#000000" text-anchor="middle" textLength="103.29" lengthAdjust="spacingAndGlyphs">Delivered to buyer</text>
<text x="1380.00" y="917.00" font-size="13.3" fill="#000000" text-anchor="middle" textLength="34.85" lengthAdjust="spacingAndGlyphs">44212</text>
<text x="1434.00" y="917.00" font-size="13.3" fill="#000000" text-anchor="middle" textLength="45.64" lengthAdjust="spacingAndGlyphs">21 (S20)</text>
<text x="1495.50" y="917.00" font-size="13.3" fill="#000000" text-anchor="middle" textLength="51.61" lengthAdjust="spacingAndGlyphs">Northern</text>
<text x="1631.50" y="917.00" font-size="13.3" fill="#000000" text-anchor="middle" textLength="179.27" lengthAdjust="spacingAndGlyphs">Thu, 25 Nov, 2021, 10:09 pm IST</text>
<text x="1758.00" y="918.00" font-size="12.4" fill="#000000" text-anchor="middle" textLength="13.28" lengthAdjust="spacingAndGlyphs">25</text>
<text x="1813.00" y="918.00" font-size="12.4" fill="#000000" text-anchor="middle" textLength="13.28" lengthAdjust="spacingAndGlyphs">11</text>
<text x="1868.00" y="918.00" font-size="12.4" fill="#000000" text-anchor="middle" textLength="26.56" lengthAdjust="spacingAndGlyphs">2021</text>
<text x="73.00" y="935.00" font-size="13.3" fill="#000000" text-anchor="middle" textLength="20.91" lengthAdjust="spacingAndGlyphs">406</text>
<text x="171.00" y="935.00" font-size="13.3" fill="#000000" text-anchor="middle" textLength="9.10" lengthAdjust="spacingAndGlyphs">O</text>
<text x="273.50" y="935.00" font-size="13.3" fill="#000000" text-anchor="middle" textLength="31.21" lengthAdjust="spacingAndGlyphs">Pooja</text>
<text x="410.50" y="935.00" font-size="13.3" fill="#000000" text-anchor="middle" textLength="73.07" lengthAdjust="spacingAndGlyphs">GURUGRAM,</text>
<text x="558.50" y="935.00" font-size="13.3" fill="#000000" text-anchor="middle" textLength="54.25" lengthAdjust="spacingAndGlyphs">HARYANA</text>
<g clip-path="url(#cg)">
<text x="790.00" y="935.00" font-size="13.3" fill="#000000" text-anchor="middle" textLength="328.09" lengthAdjust="spacingAndGlyphs">le Lipstick Cases with Mirror, Handy and Compact Handcraf</text>
</g>
<text x="986.00" y="935.00" font-size="13.3" fill="#000000" text-anchor="middle" textLength="6.97" lengthAdjust="spacingAndGlyphs">1</text>
<text x="1293.00" y="935.00" font-size="13.3" fill="#000000" text-anchor="middle" textLength="103.29" lengthAdjust="spacingAndGlyphs">Delivered to buyer</text>
<text x="1380.00" y="935.00" font-size="13.3" fill="#000000" text-anchor="middle" textLength="34.85" lengthAdjust="spacingAndGlyphs">44212</text>
<text x="1434.00" y="935.00" font-size="13.3" fill="#000000" text-anchor="middle" textLength="45.64" lengthAdjust="spacingAndGlyphs">21 (S20)</text>
<text x="1495.50" y="935.00" font-size="13.3" fill="#000000" text-anchor="middle" textLength="51.61" lengthAdjust="spacingAndGlyphs">Northern</text>
<text x="1631.50" y="935.00" font-size="13.3" fill="#000000" text-anchor="middle" textLength="172.30" lengthAdjust="spacingAndGlyphs">Thu, 18 Nov, 2021, 9:55 pm IST</text>
<text x="1758.00" y="936.00" font-size="12.4" fill="#000000" text-anchor="middle" textLength="13.28" lengthAdjust="spacingAndGlyphs">18</text>
<text x="1813.00" y="936.00" font-size="12.4" fill="#000000" text-anchor="middle" textLength="13.28" lengthAdjust="spacingAndGlyphs">11</text>
<text x="1868.00" y="936.00" font-size="12.4" fill="#000000" text-anchor="middle" textLength="26.56" lengthAdjust="spacingAndGlyphs">2021</text>
<text x="73.00" y="953.00" font-size="13.3" fill="#000000" text-anchor="middle" textLength="20.91" lengthAdjust="spacingAndGlyphs">407</text>
<text x="171.00" y="953.00" font-size="13.3" fill="#000000" text-anchor="middle" textLength="7.10" lengthAdjust="spacingAndGlyphs">P</text>
<text x="273.50" y="953.00" font-size="13.3" fill="#000000" text-anchor="middle" textLength="35.47" lengthAdjust="spacingAndGlyphs">Rohan</text>
<text x="410.50" y="953.00" font-size="13.3" fill="#000000" text-anchor="middle" textLength="73.07" lengthAdjust="spacingAndGlyphs">GURUGRAM,</text>
<text x="558.50" y="953.00" font-size="13.3" fill="#000000" text-anchor="middle" textLength="54.25" lengthAdjust="spacingAndGlyphs">HARYANA</text>
<g clip-path="url(#cg)">
<text x="790.00" y="953.00" font-size="13.3" fill="#000000" text-anchor="middle" textLength="328.09" lengthAdjust="spacingAndGlyphs">le Lipstick Cases with Mirror, Handy and Compact Handcraf</text>
</g>
<text x="986.00" y="953.00" font-size="13.3" fill="#000000" text-anchor="middle" textLength="6.97" lengthAdjust="spacingAndGlyphs">1</text>
<path d="M1051.46,944.50 H1058.46 M1051.46,946.50 H1058.46 M1051.86,948.50 H1053.66 Q1056.36,948.50 1056.36,946.50 M1053.06,948.50 L1057.86,953.00" fill="none" stroke="#000" stroke-width="1.0" shape-rendering="geometricPrecision"/>
<text x="1058.33" y="953.00" font-size="13.3" fill="#000000" textLength="38.32" lengthAdjust="spacingAndGlyphs">449.00</text>
<text x="1293.00" y="953.00" font-size="13.3" fill="#000000" text-anchor="middle" textLength="103.29" lengthAdjust="spacingAndGlyphs">Delivered to buyer</text>
<text x="1380.00" y="953.00" font-size="13.3" fill="#000000" text-anchor="middle" textLength="34.85" lengthAdjust="spacingAndGlyphs">44212</text>
<text x="1434.00" y="953.00" font-size="13.3" fill="#000000" text-anchor="middle" textLength="45.64" lengthAdjust="spacingAndGlyphs">21 (S20)</text>
<text x="1495.50" y="953.00" font-size="13.3" fill="#000000" text-anchor="middle" textLength="51.61" lengthAdjust="spacingAndGlyphs">Northern</text>
<text x="1631.50" y="953.00" font-size="13.3" fill="#000000" text-anchor="middle" textLength="165.42" lengthAdjust="spacingAndGlyphs">Fri, 26 Nov, 2021, 7:22 pm IST</text>
<text x="1758.00" y="954.00" font-size="12.4" fill="#000000" text-anchor="middle" textLength="13.28" lengthAdjust="spacingAndGlyphs">26</text>
<text x="1813.00" y="954.00" font-size="12.4" fill="#000000" text-anchor="middle" textLength="13.28" lengthAdjust="spacingAndGlyphs">11</text>
<text x="1868.00" y="954.00" font-size="12.4" fill="#000000" text-anchor="middle" textLength="26.56" lengthAdjust="spacingAndGlyphs">2021</text>
<text x="73.00" y="971.00" font-size="13.3" fill="#000000" text-anchor="middle" textLength="20.91" lengthAdjust="spacingAndGlyphs">407</text>
<text x="171.00" y="971.00" font-size="13.3" fill="#000000" text-anchor="middle" textLength="7.10" lengthAdjust="spacingAndGlyphs">P</text>
<text x="273.50" y="971.00" font-size="13.3" fill="#000000" text-anchor="middle" textLength="30.00" lengthAdjust="spacingAndGlyphs">anjali</text>
<text x="410.50" y="971.00" font-size="13.3" fill="#000000" text-anchor="middle" textLength="73.07" lengthAdjust="spacingAndGlyphs">GURUGRAM,</text>
<text x="558.50" y="971.00" font-size="13.3" fill="#000000" text-anchor="middle" textLength="54.25" lengthAdjust="spacingAndGlyphs">HARYANA</text>
<g clip-path="url(#cg)">
<text x="790.00" y="971.00" font-size="13.3" fill="#000000" text-anchor="middle" textLength="334.28" lengthAdjust="spacingAndGlyphs">ound Jewelry Boxes | Button Closure Multiple Utility Case (S</text>
</g>
<text x="986.00" y="971.00" font-size="13.3" fill="#000000" text-anchor="middle" textLength="6.97" lengthAdjust="spacingAndGlyphs">1</text>
<path d="M1051.46,962.50 H1058.46 M1051.46,964.50 H1058.46 M1051.86,966.50 H1053.66 Q1056.36,966.50 1056.36,964.50 M1053.06,966.50 L1057.86,971.00" fill="none" stroke="#000" stroke-width="1.0" shape-rendering="geometricPrecision"/>
<text x="1058.33" y="971.00" font-size="13.3" fill="#000000" textLength="38.32" lengthAdjust="spacingAndGlyphs">399.00</text>
<text x="1293.00" y="971.00" font-size="13.3" fill="#000000" text-anchor="middle" textLength="103.29" lengthAdjust="spacingAndGlyphs">Delivered to buyer</text>
<text x="1380.00" y="971.00" font-size="13.3" fill="#000000" text-anchor="middle" textLength="34.85" lengthAdjust="spacingAndGlyphs">44212</text>
<text x="1434.00" y="971.00" font-size="13.3" fill="#000000" text-anchor="middle" textLength="45.64" lengthAdjust="spacingAndGlyphs">21 (S20)</text>
<text x="1495.50" y="971.00" font-size="13.3" fill="#000000" text-anchor="middle" textLength="51.61" lengthAdjust="spacingAndGlyphs">Northern</text>
<text x="1631.50" y="971.00" font-size="13.3" fill="#000000" text-anchor="middle" textLength="176.21" lengthAdjust="spacingAndGlyphs">Wed, 8 Dec, 2021, 12:15 am IST</text>
<text x="1758.00" y="972.00" font-size="12.4" fill="#000000" text-anchor="middle" textLength="6.64" lengthAdjust="spacingAndGlyphs">8</text>
<text x="1813.00" y="972.00" font-size="12.4" fill="#000000" text-anchor="middle" textLength="13.28" lengthAdjust="spacingAndGlyphs">12</text>
<text x="1868.00" y="972.00" font-size="12.4" fill="#000000" text-anchor="middle" textLength="26.56" lengthAdjust="spacingAndGlyphs">2021</text>
<rect x="122" y="164" width="97" height="2" fill="#217346"/>
<rect x="122" y="183" width="94" height="2" fill="#217346"/>
<rect x="122" y="164" width="2" height="21" fill="#217346"/>
<rect x="218" y="164" width="2" height="17" fill="#217346"/>
<rect x="215" y="180" width="7" height="7" fill="#ffffff"/>
<rect x="216" y="181" width="5" height="5" fill="#217346"/>
<path d="M124,256 H129 L124,261 Z" fill="#1a8a1a" shape-rendering="geometricPrecision"/>
<path d="M124,436 H129 L124,441 Z" fill="#1a8a1a" shape-rendering="geometricPrecision"/>
<path d="M1410,418 H1415 L1410,423 Z" fill="#1a8a1a" shape-rendering="geometricPrecision"/>
<path d="M1841,616 H1846 L1841,621 Z" fill="#1a8a1a" shape-rendering="geometricPrecision"/>
<path d="M1841,958 H1846 L1841,963 Z" fill="#1a8a1a" shape-rendering="geometricPrecision"/>
<rect x="1892" y="128" width="21" height="852" fill="#e6e6e6"/>
<rect x="1896" y="363" width="17" height="598" fill="#ececec"/>
<rect x="1895.5" y="130.5" width="19" height="18" fill="#ffffff" stroke="#c6c6c6"/>
<path d="M1900,141 H1909 L1904.5,136 Z" fill="#444444" shape-rendering="geometricPrecision"/>
<rect x="1895.5" y="148.5" width="19" height="214" fill="#ffffff" stroke="#c6c6c6"/>
<rect x="1895" y="148" width="18" height="2" fill="#c6c6c6"/>
<rect x="1895.5" y="961.5" width="19" height="18" fill="#ffffff" stroke="#c6c6c6"/>
<path d="M1900,968 H1909 L1904.5,973 Z" fill="#444444" shape-rendering="geometricPrecision"/>
<rect x="0" y="980" width="1913" height="11" fill="#e6e6e6"/>
<rect x="0" y="979" width="1913" height="1" fill="#c6c6c6"/>
<rect x="100" y="983" width="1" height="8" fill="#9a9a9a"/>
<rect x="170" y="983" width="1" height="8" fill="#9a9a9a"/>
<rect x="603" y="983" width="1" height="8" fill="#9a9a9a"/>
<rect x="767" y="983" width="1" height="8" fill="#9a9a9a"/>
<rect x="322" y="979" width="102" height="12" fill="#ffffff"/>
<rect x="322" y="979" width="1" height="12" fill="#c6c6c6"/>
<rect x="423" y="979" width="1" height="12" fill="#c6c6c6"/>
<text x="114.50" y="996.00" font-size="16" fill="#444444" textLength="41.50" lengthAdjust="spacingAndGlyphs">Task1</text>
<text x="185.50" y="996.00" font-size="16" fill="#444444" textLength="120.50" lengthAdjust="spacingAndGlyphs">Reference Table</text>
<text x="335.00" y="996.00" font-size="16" font-weight="bold" fill="#217346" textLength="74.99" lengthAdjust="spacingAndGlyphs">Customer</text>
<text x="440.60" y="996.00" font-size="16" fill="#444444" textLength="145.40" lengthAdjust="spacingAndGlyphs">Step by step guide</text>
<text x="617.60" y="996.00" font-size="16" fill="#444444" textLength="134.40" lengthAdjust="spacingAndGlyphs">home assignment</text>
<circle cx="810.5" cy="994" r="8.5" fill="none" stroke="#8a8a8a" stroke-width="1.2" shape-rendering="geometricPrecision"/>
<path d="M27.5,991 L31.5,988 V991 Z M56,991 L52,988 V991 Z" fill="#bdbdbd" shape-rendering="geometricPrecision"/>
<rect x="1146" y="985" width="3" height="3" fill="#a6a6a6"/>
<rect x="1146" y="989" width="3" height="3" fill="#a6a6a6"/>
<rect x="1164.5" y="984.5" width="18" height="10" fill="#ffffff" stroke="#c6c6c6"/>
<path d="M1176,987 L1171,991 L1176,995 Z" fill="#444444"/>
<rect x="1218.5" y="984.5" width="585" height="10" fill="#ffffff" stroke="#c6c6c6"/>
<rect x="1873.5" y="984.5" width="18" height="10" fill="#ffffff" stroke="#c6c6c6"/>
<path d="M1880,987 L1885,991 L1880,995 Z" fill="#444444"/>
</svg></body></html>
